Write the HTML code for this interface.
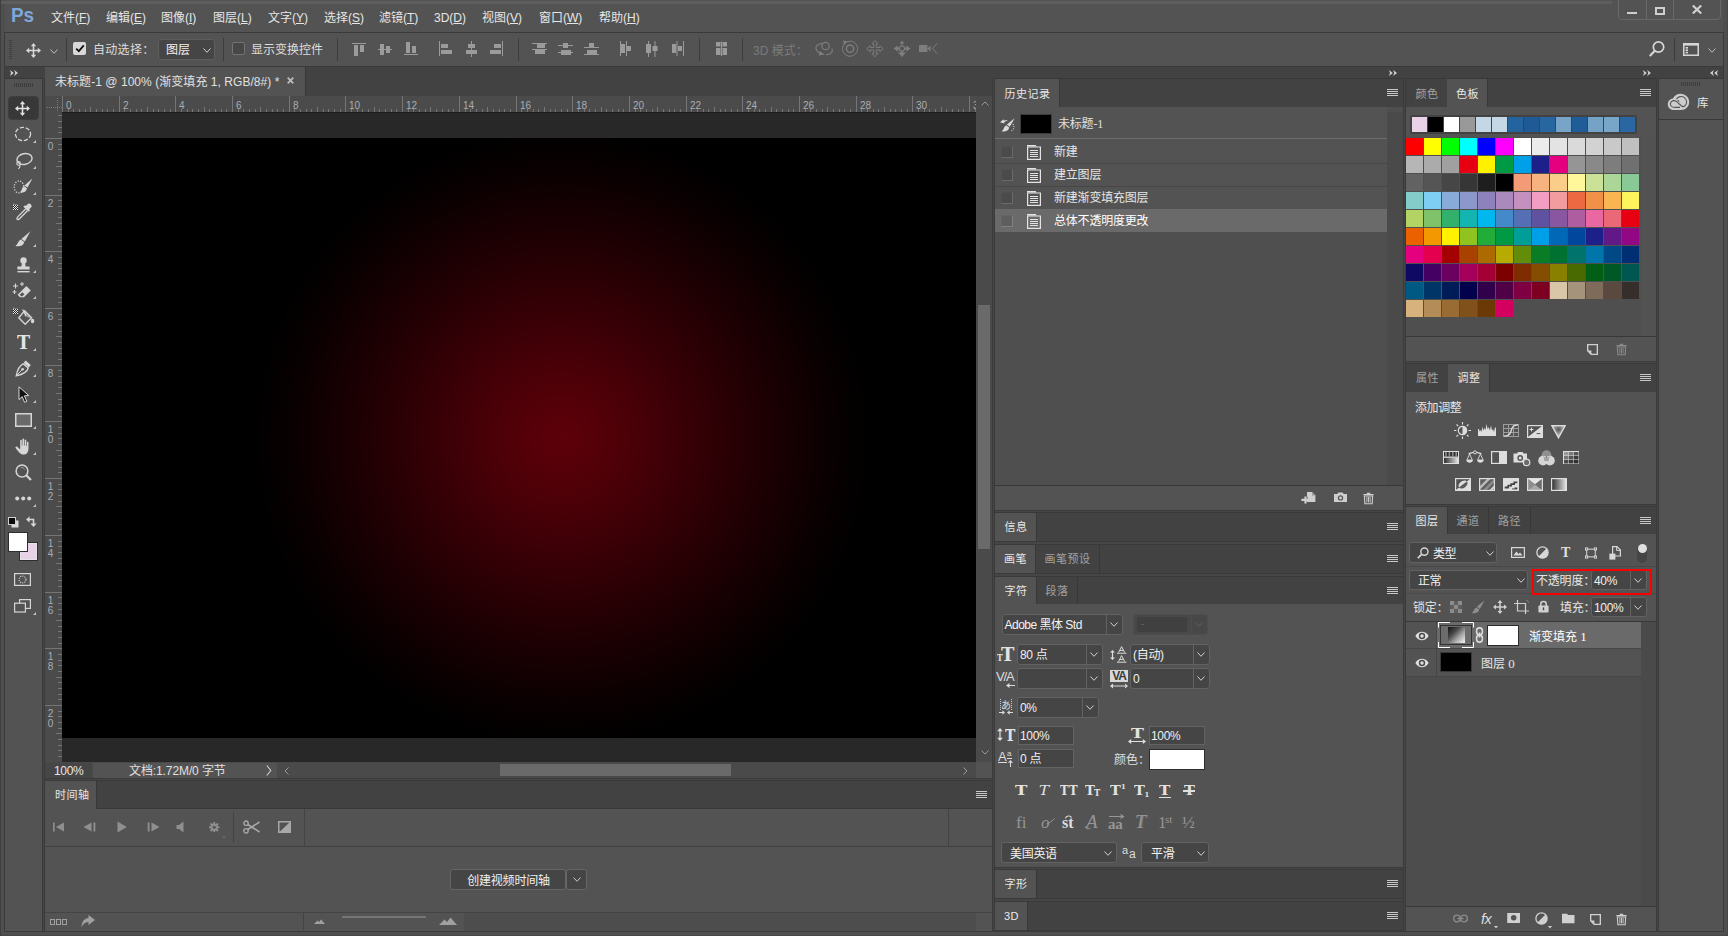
<!DOCTYPE html>
<html lang="zh-CN"><head><meta charset="utf-8"><title>Photoshop</title>
<style>
html,body{margin:0;padding:0;}
body{width:1728px;height:936px;overflow:hidden;background:#535353;position:relative;font-family:"Liberation Sans","Noto Sans CJK SC",sans-serif;font-size:12px;}
body div,body svg{position:absolute;}
div.t{font-family:"Liberation Sans","Noto Sans CJK SC",sans-serif;}
u{text-decoration:underline;text-underline-offset:1px;}
</style></head><body>
<div style="left:0px;top:0px;width:1728px;height:936px;background:#4f4f4f;"></div>
<div style="left:5px;top:0px;width:1718px;height:931px;background:#535353;"></div>
<div style="left:0px;top:1px;width:1612px;height:3px;background:#5d5d5d;"></div>
<div style="left:4px;top:33px;width:1px;height:898px;background:#3a3a3a;"></div>
<div style="left:1723px;top:33px;width:1px;height:898px;background:#3a3a3a;"></div>
<div style="left:4px;top:931px;width:1720px;height:1px;background:#3a3a3a;"></div>
<div style="left:1727px;top:0px;width:1px;height:936px;background:#474747;"></div>
<div style="left:0px;top:935px;width:1728px;height:1px;background:#474747;"></div>
<div style="left:0px;top:0px;width:1px;height:936px;background:#3e3e3e;"></div>
<div class="t" style="left:11px;top:2px;height:26px;line-height:26px;font-size:21px;font-weight:bold;color:#7ea6d8;letter-spacing:0px;font-family:'Liberation Sans',sans-serif;transform:scaleX(0.9);transform-origin:0 0">Ps</div>
<div class="t" style="left:51px;top:9px;height:18px;line-height:18px;color:#e6e6e6;font-size:12px;white-space:nowrap;">文件(<u>F</u>)</div>
<div class="t" style="left:106px;top:9px;height:18px;line-height:18px;color:#e6e6e6;font-size:12px;white-space:nowrap;">编辑(<u>E</u>)</div>
<div class="t" style="left:161px;top:9px;height:18px;line-height:18px;color:#e6e6e6;font-size:12px;white-space:nowrap;">图像(<u>I</u>)</div>
<div class="t" style="left:213px;top:9px;height:18px;line-height:18px;color:#e6e6e6;font-size:12px;white-space:nowrap;">图层(<u>L</u>)</div>
<div class="t" style="left:268px;top:9px;height:18px;line-height:18px;color:#e6e6e6;font-size:12px;white-space:nowrap;">文字(<u>Y</u>)</div>
<div class="t" style="left:324px;top:9px;height:18px;line-height:18px;color:#e6e6e6;font-size:12px;white-space:nowrap;">选择(<u>S</u>)</div>
<div class="t" style="left:379px;top:9px;height:18px;line-height:18px;color:#e6e6e6;font-size:12px;white-space:nowrap;">滤镜(<u>T</u>)</div>
<div class="t" style="left:434px;top:9px;height:18px;line-height:18px;color:#e6e6e6;font-size:12px;white-space:nowrap;">3D(<u>D</u>)</div>
<div class="t" style="left:482px;top:9px;height:18px;line-height:18px;color:#e6e6e6;font-size:12px;white-space:nowrap;">视图(<u>V</u>)</div>
<div class="t" style="left:539px;top:9px;height:18px;line-height:18px;color:#e6e6e6;font-size:12px;white-space:nowrap;">窗口(<u>W</u>)</div>
<div class="t" style="left:599px;top:9px;height:18px;line-height:18px;color:#e6e6e6;font-size:12px;white-space:nowrap;">帮助(<u>H</u>)</div>
<div style="left:1618px;top:-2px;width:103px;height:22px;border:1px solid #686868;border-radius:0 0 4px 4px;box-sizing:border-box;"></div>
<div style="left:1646px;top:0px;width:1px;height:19px;background:#686868;"></div>
<div style="left:1673px;top:0px;width:1px;height:19px;background:#686868;"></div>
<div style="left:1627px;top:12px;width:10px;height:2px;background:#cfcfcf;"></div>
<div style="left:1655px;top:7px;width:10px;height:8px;border:2px solid #cfcfcf;box-sizing:border-box;"></div>
<svg style="left:1692px;top:5px;" width="10" height="9" viewBox="0 0 10 9"><path d="M0.8 0.5 L9.2 8.5 M9.2 0.5 L0.8 8.5" stroke="#cfcfcf" stroke-width="2.2" fill="none"/></svg>
<div style="left:4px;top:32px;width:1720px;height:1px;background:#3a3a3a;"></div>
<div style="left:4px;top:66px;width:1720px;height:1px;background:#3a3a3a;"></div>
<svg style="left:9px;top:40px;" width="3" height="19" viewBox="0 0 3 19"><rect x="0" y="0" width="3" height="1" fill="#3f3f3f"/><rect x="0" y="2" width="3" height="1" fill="#3f3f3f"/><rect x="0" y="4" width="3" height="1" fill="#3f3f3f"/><rect x="0" y="6" width="3" height="1" fill="#3f3f3f"/><rect x="0" y="8" width="3" height="1" fill="#3f3f3f"/><rect x="0" y="10" width="3" height="1" fill="#3f3f3f"/><rect x="0" y="12" width="3" height="1" fill="#3f3f3f"/><rect x="0" y="14" width="3" height="1" fill="#3f3f3f"/><rect x="0" y="16" width="3" height="1" fill="#3f3f3f"/><rect x="0" y="18" width="3" height="1" fill="#3f3f3f"/></svg>
<svg style="left:26px;top:43px;" width="15" height="15" viewBox="0 0 15 15"><path d="M7.5 0 L10.2 3.2 L8.3 3.2 L8.3 6.7 L11.8 6.7 L11.8 4.8 L15 7.5 L11.8 10.2 L11.8 8.3 L8.3 8.3 L8.3 11.8 L10.2 11.8 L7.5 15 L4.8 11.8 L6.7 11.8 L6.7 8.3 L3.2 8.3 L3.2 10.2 L0 7.5 L3.2 4.8 L3.2 6.7 L6.7 6.7 L6.7 3.2 L4.8 3.2 Z" fill="#d8d8d8"/></svg>
<svg style="left:50px;top:49px;" width="8" height="5" viewBox="0 0 8 5"><path d="M0.5 0.5 L4.0 4.3 L7.5 0.5" fill="none" stroke="#bdbdbd" stroke-width="1.0"/></svg>
<div style="left:66px;top:38px;width:1px;height:23px;background:#3c3c3c;"></div>
<div style="left:73px;top:42px;width:13px;height:13px;background:#d9d9d9;border-radius:2px;"></div>
<svg style="left:75px;top:44px;" width="10" height="9" viewBox="0 0 10 9"><path d="M1.2 4.6 L3.8 7.2 L8.8 1.4" fill="none" stroke="#111" stroke-width="1.8"/></svg>
<div class="t" style="left:93px;top:41px;height:18px;line-height:18px;color:#dddddd;font-size:12px;white-space:nowrap;letter-spacing:0.3px">自动选择：</div>
<div style="left:158px;top:39px;width:57px;height:21px;background:#454545;border:1px solid #5e5e5e;border-radius:3px;box-sizing:border-box;"></div>
<div class="t" style="left:166px;top:41px;height:18px;line-height:18px;color:#f0f0f0;font-size:12px;white-space:nowrap;">图层</div>
<svg style="left:203px;top:48px;" width="8" height="5" viewBox="0 0 8 5"><path d="M0.5 0.5 L4.0 4.3 L7.5 0.5" fill="none" stroke="#cfcfcf" stroke-width="1.0"/></svg>
<div style="left:223px;top:38px;width:1px;height:23px;background:#3c3c3c;"></div>
<div style="left:232px;top:42px;width:13px;height:13px;background:#474747;border:1px solid #737373;border-radius:2px;box-sizing:border-box;"></div>
<div class="t" style="left:251px;top:41px;height:18px;line-height:18px;color:#dddddd;font-size:12px;white-space:nowrap;">显示变换控件</div>
<div style="left:337px;top:38px;width:1px;height:23px;background:#3c3c3c;"></div>
<svg style="left:340px;top:34px;" width="416" height="32" viewBox="0 0 416 32"><rect x="12" y="9" width="14" height="1" fill="#9b9b9b"/><rect x="14" y="11" width="4" height="11" fill="#9b9b9b"/><rect x="20" y="11" width="4" height="7" fill="#9b9b9b"/><rect x="38" y="15" width="14" height="1" fill="#9b9b9b"/><rect x="40" y="10" width="4" height="11" fill="#9b9b9b"/><rect x="46" y="12" width="4" height="7" fill="#9b9b9b"/><rect x="64" y="20" width="14" height="1" fill="#9b9b9b"/><rect x="66" y="8" width="4" height="11" fill="#9b9b9b"/><rect x="72" y="12" width="4" height="7" fill="#9b9b9b"/><rect x="99" y="7" width="1" height="15" fill="#9b9b9b"/><rect x="101" y="10" width="7" height="4" fill="#9b9b9b"/><rect x="101" y="16" width="11" height="4" fill="#9b9b9b"/><rect x="131" y="7" width="1" height="16" fill="#9b9b9b"/><rect x="128" y="10" width="7" height="4" fill="#9b9b9b"/><rect x="126" y="16" width="11" height="4" fill="#9b9b9b"/><rect x="162" y="7" width="1" height="15" fill="#9b9b9b"/><rect x="154" y="10" width="7" height="4" fill="#9b9b9b"/><rect x="150" y="16" width="11" height="4" fill="#9b9b9b"/><rect x="192" y="9" width="15" height="1" fill="#9b9b9b"/><rect x="197" y="10" width="8" height="4" fill="#9b9b9b"/><rect x="192" y="15" width="15" height="1" fill="#9b9b9b"/><rect x="195" y="16" width="10" height="4" fill="#9b9b9b"/><rect x="218" y="11" width="15" height="1" fill="#9b9b9b"/><rect x="223" y="9" width="5" height="5" fill="#9b9b9b"/><rect x="218" y="18" width="15" height="1" fill="#9b9b9b"/><rect x="221" y="16" width="10" height="5" fill="#9b9b9b"/><rect x="244" y="13" width="15" height="1" fill="#9b9b9b"/><rect x="249" y="9" width="5" height="4" fill="#9b9b9b"/><rect x="244" y="20" width="15" height="1" fill="#9b9b9b"/><rect x="247" y="16" width="10" height="4" fill="#9b9b9b"/><rect x="280" y="7" width="1" height="15" fill="#9b9b9b"/><rect x="281" y="10" width="4" height="9" fill="#9b9b9b"/><rect x="286" y="7" width="1" height="15" fill="#9b9b9b"/><rect x="287" y="12" width="4" height="5" fill="#9b9b9b"/><rect x="308" y="7" width="1" height="16" fill="#9b9b9b"/><rect x="306" y="10" width="5" height="9" fill="#9b9b9b"/><rect x="314.5" y="7" width="1" height="16" fill="#9b9b9b"/><rect x="312.5" y="12" width="5" height="5" fill="#9b9b9b"/><rect x="332" y="10" width="4" height="9" fill="#9b9b9b"/><rect x="336.5" y="7" width="1" height="15" fill="#9b9b9b"/><rect x="338" y="12" width="4" height="5" fill="#9b9b9b"/><rect x="343" y="7" width="1" height="15" fill="#9b9b9b"/><rect x="376" y="8" width="4.5" height="4.5" fill="#9b9b9b"/><rect x="382.5" y="8" width="4.5" height="4.5" fill="#9b9b9b"/><rect x="376" y="14" width="4.5" height="7" fill="#9b9b9b"/><rect x="382.5" y="14" width="4.5" height="7" fill="#9b9b9b"/><rect x="381" y="7.5" width="1" height="14.5" fill="#9b9b9b"/></svg>
<div style="left:518px;top:38px;width:1px;height:23px;background:#3c3c3c;"></div>
<div style="left:699px;top:38px;width:1px;height:23px;background:#3c3c3c;"></div>
<div style="left:742px;top:38px;width:1px;height:23px;background:#3c3c3c;"></div>
<div class="t" style="left:753px;top:42px;height:18px;line-height:18px;color:#7b7b7b;font-size:12px;white-space:nowrap;">3D 模式：</div>
<svg style="left:812px;top:38px;" width="130" height="22" viewBox="0 0 130 22"><circle cx="13.600000000000023" cy="8" r="3.7" fill="none" stroke="#7e7e7e" stroke-width="1.2"/><path d="M822 43.4 C818 43.6 814.6 46.4 816.4 50 C817.2 51.6 818.6 52.8 820.4 53.6" fill="none" stroke="#7e7e7e" stroke-width="1.1" transform="translate(-812 -38)"/><path d="M819.6 51 L824.8 54.6 L818.6 55.6Z" fill="#7e7e7e" stroke="none" stroke-width="1.1" transform="translate(-812 -38)"/><path d="M826 54.6 C830 54.8 833.6 52.4 831.8 48.6" fill="none" stroke="#7e7e7e" stroke-width="1.1" transform="translate(-812 -38)"/><circle cx="38" cy="10.700000000000003" r="7.6" fill="none" stroke="#7e7e7e" stroke-width="1"/><circle cx="38" cy="10.700000000000003" r="3.6" fill="none" stroke="#7e7e7e" stroke-width="1.5"/><path d="M843 40.6 L847.4 41.6 L844.2 45Z" fill="#7e7e7e" stroke="none" stroke-width="1.1" transform="translate(-812 -38)"/><path d="M875 40.6 L878 44 H876.2 V47.5 H879.8 V45.7 L883.2 48.7 L879.8 51.7 V49.9 H876.2 V53.4 H878 L875 56.8 L872 53.4 H873.8 V49.9 H870.2 V51.7 L866.8 48.7 L870.2 45.7 V47.5 H873.8 V44 H872Z" fill="none" stroke="#7e7e7e" stroke-width="1" transform="translate(-812 -38)"/><path d="M902 40.6 L904.4 43.6 H899.6Z M893.6 48.6 L897.8 45.4 V47.6 H899 V49.6 H897.8 V51.8Z M910.6 48.6 L906.4 45.4 V47.6 H905 V49.6 H906.4 V51.8Z M902 57 L898 52.6 H900.6 V51.6 H903.4 V52.6 H906Z M901.4 43.4 H902.6 V45.6 H901.4Z" fill="#7e7e7e" stroke="none" stroke-width="1.1" transform="translate(-812 -38)"/><circle cx="90" cy="10.600000000000001" r="2.6" fill="none" stroke="#7e7e7e" stroke-width="1.2"/><path d="M919 45 H927.4 V52 H919Z M927.4 48.5 L930.6 45.6 V51.4Z" fill="#7e7e7e" stroke="none" stroke-width="1.1" transform="translate(-812 -38)"/><path d="M937 43.4 L932.6 48.5 L937 53.6" fill="none" stroke="#7e7e7e" stroke-width="1" transform="translate(-812 -38)"/></svg>
<svg style="left:1648px;top:40px;" width="18" height="18" viewBox="0 0 18 18"><circle cx="10.5" cy="7" r="5.2" fill="none" stroke="#d6d6d6" stroke-width="1.7"/><path d="M6.8 10.8 L1.8 16" stroke="#d6d6d6" stroke-width="2.2" fill="none"/></svg>
<div style="left:1674px;top:38px;width:1px;height:23px;background:#3c3c3c;"></div>
<svg style="left:1683px;top:43px;" width="16" height="13" viewBox="0 0 16 13"><rect x="0.75" y="0.75" width="14.5" height="11.5" fill="none" stroke="#d6d6d6" stroke-width="1.5"/><rect x="1" y="1" width="14" height="1.6" fill="#d6d6d6"/><rect x="2.6" y="4" width="2.4" height="1.6" fill="#d6d6d6"/><rect x="2.6" y="6.4" width="2.4" height="1.6" fill="#d6d6d6"/><rect x="2.6" y="8.8" width="2.4" height="1.6" fill="#d6d6d6"/></svg>
<svg style="left:1708px;top:48px;" width="8" height="5" viewBox="0 0 8 5"><path d="M0.5 0.5 L4.0 4.3 L7.5 0.5" fill="none" stroke="#bdbdbd" stroke-width="1.0"/></svg>
<div style="left:5px;top:67px;width:1718px;height:11px;background:#424242;"></div>
<div style="left:5px;top:78px;width:40px;height:1px;background:#383838;"></div>
<svg style="left:10px;top:70px;" width="8" height="6" viewBox="0 0 8 6"><path d="M0 0 L3.8 3 L0 6 L1 3 Z M4.2 0 L8 3 L4.2 6 L5.2 3 Z" fill="#cfcfcf"/></svg>
<div style="left:42px;top:78px;width:3px;height:853px;background:#464646;"></div>
<div style="left:42px;top:78px;width:1px;height:853px;background:#3a3a3a;"></div>
<div style="left:44px;top:78px;width:1px;height:853px;background:#3a3a3a;"></div>
<div style="left:45px;top:67px;width:947px;height:29px;background:#424242;"></div>
<div style="left:45px;top:67px;width:260px;height:29px;background:#535353;"></div>
<div style="left:305px;top:67px;width:1px;height:29px;background:#383838;"></div>
<div class="t" style="left:55px;top:73px;height:18px;line-height:18px;color:#e0e0e0;font-size:12px;white-space:nowrap;letter-spacing:0.05px">未标题-1 @ 100% (渐变填充 1, RGB/8#) *</div>
<svg style="left:287px;top:77px;" width="7" height="7" viewBox="0 0 7 7"><path d="M0.7 0.7 L6.3 6.3 M6.3 0.7 L0.7 6.3" stroke="#bdbdbd" stroke-width="1.7" fill="none"/></svg>
<div style="left:45px;top:96px;width:931px;height:16px;background:#4b4b4b;"></div>
<div style="left:45px;top:112px;width:17px;height:650px;background:#4b4b4b;"></div>
<svg style="left:45px;top:96px;" width="17" height="16" viewBox="0 0 17 16"><path d="M12.5 2V16 M2 11.5H17" stroke="#7a7a7a" stroke-width="1" stroke-dasharray="1 1" fill="none"/></svg>
<svg style="left:62px;top:96px" width="914" height="16"><g stroke="#757575" stroke-width="1"><path d="M0.5 0V16"/><path d="M6.5 13V16"/><path d="M11.5 13V16"/><path d="M17.5 13V16"/><path d="M23.5 13V16"/><path d="M28.5 11V16"/><path d="M34.5 13V16"/><path d="M40.5 13V16"/><path d="M45.5 13V16"/><path d="M51.5 13V16"/><path d="M57.5 0V16"/><path d="M62.5 13V16"/><path d="M68.5 13V16"/><path d="M74.5 13V16"/><path d="M79.5 13V16"/><path d="M85.5 11V16"/><path d="M91.5 13V16"/><path d="M96.5 13V16"/><path d="M102.5 13V16"/><path d="M108.5 13V16"/><path d="M113.5 0V16"/><path d="M119.5 13V16"/><path d="M125.5 13V16"/><path d="M130.5 13V16"/><path d="M136.5 13V16"/><path d="M142.5 11V16"/><path d="M147.5 13V16"/><path d="M153.5 13V16"/><path d="M159.5 13V16"/><path d="M164.5 13V16"/><path d="M170.5 0V16"/><path d="M176.5 13V16"/><path d="M181.5 13V16"/><path d="M187.5 13V16"/><path d="M193.5 13V16"/><path d="M198.5 11V16"/><path d="M204.5 13V16"/><path d="M210.5 13V16"/><path d="M215.5 13V16"/><path d="M221.5 13V16"/><path d="M227.5 0V16"/><path d="M232.5 13V16"/><path d="M238.5 13V16"/><path d="M244.5 13V16"/><path d="M249.5 13V16"/><path d="M255.5 11V16"/><path d="M261.5 13V16"/><path d="M266.5 13V16"/><path d="M272.5 13V16"/><path d="M278.5 13V16"/><path d="M283.5 0V16"/><path d="M289.5 13V16"/><path d="M295.5 13V16"/><path d="M300.5 13V16"/><path d="M306.5 13V16"/><path d="M312.5 11V16"/><path d="M317.5 13V16"/><path d="M323.5 13V16"/><path d="M329.5 13V16"/><path d="M334.5 13V16"/><path d="M340.5 0V16"/><path d="M346.5 13V16"/><path d="M351.5 13V16"/><path d="M357.5 13V16"/><path d="M363.5 13V16"/><path d="M368.5 11V16"/><path d="M374.5 13V16"/><path d="M380.5 13V16"/><path d="M386.5 13V16"/><path d="M391.5 13V16"/><path d="M397.5 0V16"/><path d="M403.5 13V16"/><path d="M408.5 13V16"/><path d="M414.5 13V16"/><path d="M420.5 13V16"/><path d="M425.5 11V16"/><path d="M431.5 13V16"/><path d="M437.5 13V16"/><path d="M442.5 13V16"/><path d="M448.5 13V16"/><path d="M454.5 0V16"/><path d="M459.5 13V16"/><path d="M465.5 13V16"/><path d="M471.5 13V16"/><path d="M476.5 13V16"/><path d="M482.5 11V16"/><path d="M488.5 13V16"/><path d="M493.5 13V16"/><path d="M499.5 13V16"/><path d="M505.5 13V16"/><path d="M510.5 0V16"/><path d="M516.5 13V16"/><path d="M522.5 13V16"/><path d="M527.5 13V16"/><path d="M533.5 13V16"/><path d="M539.5 11V16"/><path d="M544.5 13V16"/><path d="M550.5 13V16"/><path d="M556.5 13V16"/><path d="M561.5 13V16"/><path d="M567.5 0V16"/><path d="M573.5 13V16"/><path d="M578.5 13V16"/><path d="M584.5 13V16"/><path d="M590.5 13V16"/><path d="M595.5 11V16"/><path d="M601.5 13V16"/><path d="M607.5 13V16"/><path d="M612.5 13V16"/><path d="M618.5 13V16"/><path d="M624.5 0V16"/><path d="M629.5 13V16"/><path d="M635.5 13V16"/><path d="M641.5 13V16"/><path d="M646.5 13V16"/><path d="M652.5 11V16"/><path d="M658.5 13V16"/><path d="M663.5 13V16"/><path d="M669.5 13V16"/><path d="M675.5 13V16"/><path d="M680.5 0V16"/><path d="M686.5 13V16"/><path d="M692.5 13V16"/><path d="M697.5 13V16"/><path d="M703.5 13V16"/><path d="M709.5 11V16"/><path d="M714.5 13V16"/><path d="M720.5 13V16"/><path d="M726.5 13V16"/><path d="M731.5 13V16"/><path d="M737.5 0V16"/><path d="M743.5 13V16"/><path d="M748.5 13V16"/><path d="M754.5 13V16"/><path d="M760.5 13V16"/><path d="M765.5 11V16"/><path d="M771.5 13V16"/><path d="M777.5 13V16"/><path d="M782.5 13V16"/><path d="M788.5 13V16"/><path d="M794.5 0V16"/><path d="M799.5 13V16"/><path d="M805.5 13V16"/><path d="M811.5 13V16"/><path d="M816.5 13V16"/><path d="M822.5 11V16"/><path d="M828.5 13V16"/><path d="M833.5 13V16"/><path d="M839.5 13V16"/><path d="M845.5 13V16"/><path d="M850.5 0V16"/><path d="M856.5 13V16"/><path d="M862.5 13V16"/><path d="M867.5 13V16"/><path d="M873.5 13V16"/><path d="M879.5 11V16"/><path d="M884.5 13V16"/><path d="M890.5 13V16"/><path d="M896.5 13V16"/><path d="M901.5 13V16"/><path d="M907.5 0V16"/><path d="M913.5 13V16"/></g></svg>
<div class="t" style="left:66px;top:100px;height:11px;line-height:11px;color:#a9adb3;font-size:10px;white-space:nowrap;font-family:'Liberation Sans',sans-serif;">0</div>
<div class="t" style="left:123px;top:100px;height:11px;line-height:11px;color:#a9adb3;font-size:10px;white-space:nowrap;font-family:'Liberation Sans',sans-serif;">2</div>
<div class="t" style="left:179px;top:100px;height:11px;line-height:11px;color:#a9adb3;font-size:10px;white-space:nowrap;font-family:'Liberation Sans',sans-serif;">4</div>
<div class="t" style="left:236px;top:100px;height:11px;line-height:11px;color:#a9adb3;font-size:10px;white-space:nowrap;font-family:'Liberation Sans',sans-serif;">6</div>
<div class="t" style="left:293px;top:100px;height:11px;line-height:11px;color:#a9adb3;font-size:10px;white-space:nowrap;font-family:'Liberation Sans',sans-serif;">8</div>
<div class="t" style="left:349px;top:100px;height:11px;line-height:11px;color:#a9adb3;font-size:10px;white-space:nowrap;font-family:'Liberation Sans',sans-serif;">10</div>
<div class="t" style="left:406px;top:100px;height:11px;line-height:11px;color:#a9adb3;font-size:10px;white-space:nowrap;font-family:'Liberation Sans',sans-serif;">12</div>
<div class="t" style="left:463px;top:100px;height:11px;line-height:11px;color:#a9adb3;font-size:10px;white-space:nowrap;font-family:'Liberation Sans',sans-serif;">14</div>
<div class="t" style="left:520px;top:100px;height:11px;line-height:11px;color:#a9adb3;font-size:10px;white-space:nowrap;font-family:'Liberation Sans',sans-serif;">16</div>
<div class="t" style="left:576px;top:100px;height:11px;line-height:11px;color:#a9adb3;font-size:10px;white-space:nowrap;font-family:'Liberation Sans',sans-serif;">18</div>
<div class="t" style="left:633px;top:100px;height:11px;line-height:11px;color:#a9adb3;font-size:10px;white-space:nowrap;font-family:'Liberation Sans',sans-serif;">20</div>
<div class="t" style="left:690px;top:100px;height:11px;line-height:11px;color:#a9adb3;font-size:10px;white-space:nowrap;font-family:'Liberation Sans',sans-serif;">22</div>
<div class="t" style="left:746px;top:100px;height:11px;line-height:11px;color:#a9adb3;font-size:10px;white-space:nowrap;font-family:'Liberation Sans',sans-serif;">24</div>
<div class="t" style="left:803px;top:100px;height:11px;line-height:11px;color:#a9adb3;font-size:10px;white-space:nowrap;font-family:'Liberation Sans',sans-serif;">26</div>
<div class="t" style="left:860px;top:100px;height:11px;line-height:11px;color:#a9adb3;font-size:10px;white-space:nowrap;font-family:'Liberation Sans',sans-serif;">28</div>
<div class="t" style="left:916px;top:100px;height:11px;line-height:11px;color:#a9adb3;font-size:10px;white-space:nowrap;font-family:'Liberation Sans',sans-serif;">30</div>
<div class="t" style="left:973px;top:100px;height:11px;line-height:11px;color:#a9adb3;font-size:10px;white-space:nowrap;font-family:'Liberation Sans',sans-serif;width:3px;overflow:hidden;">3</div>
<svg style="left:45px;top:112px" width="17" height="650"><g stroke="#757575" stroke-width="1"><path d="M13 3.5H17"/><path d="M13 9.5H17"/><path d="M13 15.5H17"/><path d="M13 20.5H17"/><path d="M0 26.5H17"/><path d="M13 32.5H17"/><path d="M13 37.5H17"/><path d="M13 43.5H17"/><path d="M13 49.5H17"/><path d="M11 54.5H17"/><path d="M13 60.5H17"/><path d="M13 66.5H17"/><path d="M13 71.5H17"/><path d="M13 77.5H17"/><path d="M0 83.5H17"/><path d="M13 88.5H17"/><path d="M13 94.5H17"/><path d="M13 100.5H17"/><path d="M13 105.5H17"/><path d="M11 111.5H17"/><path d="M13 117.5H17"/><path d="M13 122.5H17"/><path d="M13 128.5H17"/><path d="M13 134.5H17"/><path d="M0 139.5H17"/><path d="M13 145.5H17"/><path d="M13 151.5H17"/><path d="M13 156.5H17"/><path d="M13 162.5H17"/><path d="M11 168.5H17"/><path d="M13 173.5H17"/><path d="M13 179.5H17"/><path d="M13 185.5H17"/><path d="M13 190.5H17"/><path d="M0 196.5H17"/><path d="M13 202.5H17"/><path d="M13 207.5H17"/><path d="M13 213.5H17"/><path d="M13 219.5H17"/><path d="M11 224.5H17"/><path d="M13 230.5H17"/><path d="M13 236.5H17"/><path d="M13 241.5H17"/><path d="M13 247.5H17"/><path d="M0 253.5H17"/><path d="M13 258.5H17"/><path d="M13 264.5H17"/><path d="M13 270.5H17"/><path d="M13 275.5H17"/><path d="M11 281.5H17"/><path d="M13 287.5H17"/><path d="M13 292.5H17"/><path d="M13 298.5H17"/><path d="M13 304.5H17"/><path d="M0 309.5H17"/><path d="M13 315.5H17"/><path d="M13 321.5H17"/><path d="M13 326.5H17"/><path d="M13 332.5H17"/><path d="M11 338.5H17"/><path d="M13 343.5H17"/><path d="M13 349.5H17"/><path d="M13 355.5H17"/><path d="M13 360.5H17"/><path d="M0 366.5H17"/><path d="M13 372.5H17"/><path d="M13 377.5H17"/><path d="M13 383.5H17"/><path d="M13 389.5H17"/><path d="M11 394.5H17"/><path d="M13 400.5H17"/><path d="M13 406.5H17"/><path d="M13 412.5H17"/><path d="M13 417.5H17"/><path d="M0 423.5H17"/><path d="M13 429.5H17"/><path d="M13 434.5H17"/><path d="M13 440.5H17"/><path d="M13 446.5H17"/><path d="M11 451.5H17"/><path d="M13 457.5H17"/><path d="M13 463.5H17"/><path d="M13 468.5H17"/><path d="M13 474.5H17"/><path d="M0 480.5H17"/><path d="M13 485.5H17"/><path d="M13 491.5H17"/><path d="M13 497.5H17"/><path d="M13 502.5H17"/><path d="M11 508.5H17"/><path d="M13 514.5H17"/><path d="M13 519.5H17"/><path d="M13 525.5H17"/><path d="M13 531.5H17"/><path d="M0 536.5H17"/><path d="M13 542.5H17"/><path d="M13 548.5H17"/><path d="M13 553.5H17"/><path d="M13 559.5H17"/><path d="M11 565.5H17"/><path d="M13 570.5H17"/><path d="M13 576.5H17"/><path d="M13 582.5H17"/><path d="M13 587.5H17"/><path d="M0 593.5H17"/><path d="M13 599.5H17"/><path d="M13 604.5H17"/><path d="M13 610.5H17"/><path d="M13 616.5H17"/><path d="M11 621.5H17"/><path d="M13 627.5H17"/><path d="M13 633.5H17"/><path d="M13 638.5H17"/><path d="M13 644.5H17"/></g></svg>
<div class="t" style="left:47px;top:141px;height:11px;line-height:11px;color:#a9adb3;font-size:10px;white-space:nowrap;font-family:'Liberation Sans',sans-serif;width:7px;text-align:center;">0</div>
<div class="t" style="left:47px;top:198px;height:11px;line-height:11px;color:#a9adb3;font-size:10px;white-space:nowrap;font-family:'Liberation Sans',sans-serif;width:7px;text-align:center;">2</div>
<div class="t" style="left:47px;top:254px;height:11px;line-height:11px;color:#a9adb3;font-size:10px;white-space:nowrap;font-family:'Liberation Sans',sans-serif;width:7px;text-align:center;">4</div>
<div class="t" style="left:47px;top:311px;height:11px;line-height:11px;color:#a9adb3;font-size:10px;white-space:nowrap;font-family:'Liberation Sans',sans-serif;width:7px;text-align:center;">6</div>
<div class="t" style="left:47px;top:368px;height:11px;line-height:11px;color:#a9adb3;font-size:10px;white-space:nowrap;font-family:'Liberation Sans',sans-serif;width:7px;text-align:center;">8</div>
<div class="t" style="left:47px;top:424px;height:11px;line-height:11px;color:#a9adb3;font-size:10px;white-space:nowrap;font-family:'Liberation Sans',sans-serif;width:7px;text-align:center;">1</div>
<div class="t" style="left:47px;top:434px;height:11px;line-height:11px;color:#a9adb3;font-size:10px;white-space:nowrap;font-family:'Liberation Sans',sans-serif;width:7px;text-align:center;">0</div>
<div class="t" style="left:47px;top:481px;height:11px;line-height:11px;color:#a9adb3;font-size:10px;white-space:nowrap;font-family:'Liberation Sans',sans-serif;width:7px;text-align:center;">1</div>
<div class="t" style="left:47px;top:491px;height:11px;line-height:11px;color:#a9adb3;font-size:10px;white-space:nowrap;font-family:'Liberation Sans',sans-serif;width:7px;text-align:center;">2</div>
<div class="t" style="left:47px;top:538px;height:11px;line-height:11px;color:#a9adb3;font-size:10px;white-space:nowrap;font-family:'Liberation Sans',sans-serif;width:7px;text-align:center;">1</div>
<div class="t" style="left:47px;top:548px;height:11px;line-height:11px;color:#a9adb3;font-size:10px;white-space:nowrap;font-family:'Liberation Sans',sans-serif;width:7px;text-align:center;">4</div>
<div class="t" style="left:47px;top:595px;height:11px;line-height:11px;color:#a9adb3;font-size:10px;white-space:nowrap;font-family:'Liberation Sans',sans-serif;width:7px;text-align:center;">1</div>
<div class="t" style="left:47px;top:605px;height:11px;line-height:11px;color:#a9adb3;font-size:10px;white-space:nowrap;font-family:'Liberation Sans',sans-serif;width:7px;text-align:center;">6</div>
<div class="t" style="left:47px;top:651px;height:11px;line-height:11px;color:#a9adb3;font-size:10px;white-space:nowrap;font-family:'Liberation Sans',sans-serif;width:7px;text-align:center;">1</div>
<div class="t" style="left:47px;top:661px;height:11px;line-height:11px;color:#a9adb3;font-size:10px;white-space:nowrap;font-family:'Liberation Sans',sans-serif;width:7px;text-align:center;">8</div>
<div class="t" style="left:47px;top:708px;height:11px;line-height:11px;color:#a9adb3;font-size:10px;white-space:nowrap;font-family:'Liberation Sans',sans-serif;width:7px;text-align:center;">2</div>
<div class="t" style="left:47px;top:718px;height:11px;line-height:11px;color:#a9adb3;font-size:10px;white-space:nowrap;font-family:'Liberation Sans',sans-serif;width:7px;text-align:center;">0</div>
<div style="left:62px;top:112px;width:914px;height:650px;background:#282828;"></div>
<div style="left:62px;top:112px;width:914px;height:1px;background:#1d1d1d;"></div>
<div style="left:62px;top:138px;width:914px;height:600px;background:#000;overflow:hidden;"><div style="position:absolute;left:0;top:0;width:1000px;height:600px;background:radial-gradient(circle 300px at 500px 300px, rgb(92,0,9) 0%, rgb(90,0,9) 5%, rgb(83,0,8) 14%, rgb(72,0,7) 26%, rgb(57,0,6) 40%, rgb(47,0,5) 50%, rgb(32,0,3) 65%, rgb(20,0,2) 78%, rgb(9,0,1) 90%, rgb(2,0,0) 100%, rgb(0,0,0) 104%),#000"></div></div>
<div style="left:976px;top:96px;width:16px;height:666px;background:#4a4a4a;"></div>
<svg style="left:981px;top:101px;" width="8" height="5" viewBox="0 0 8 5"><path d="M0.5 4.5 L4 1 L7.5 4.5" fill="none" stroke="#9a9a9a" stroke-width="1"/></svg>
<svg style="left:981px;top:750px;" width="8" height="5" viewBox="0 0 8 5"><path d="M0.5 0.5 L4 4 L7.5 0.5" fill="none" stroke="#9a9a9a" stroke-width="1"/></svg>
<div style="left:978px;top:305px;width:12px;height:244px;background:#6a6a6a;"></div>
<div style="left:992px;top:78px;width:3px;height:853px;background:#464646;"></div>
<div style="left:992px;top:78px;width:1px;height:853px;background:#3a3a3a;"></div>
<div style="left:994px;top:78px;width:1px;height:853px;background:#3a3a3a;"></div>
<div style="left:45px;top:762px;width:931px;height:16px;background:#4a4a4a;"></div>
<div style="left:976px;top:762px;width:16px;height:16px;background:#535353;"></div>
<div style="left:45px;top:763px;width:47px;height:15px;background:#464646;"></div>
<div class="t" style="left:54px;top:762.5px;height:16px;line-height:16px;color:#e6e6e6;font-size:12px;white-space:nowrap;font-family:'Liberation Sans',sans-serif;letter-spacing:-0.3px">100%</div>
<div style="left:93px;top:763px;width:184px;height:15px;background:#535353;"></div>
<div class="t" style="left:129px;top:763px;height:16px;line-height:16px;color:#e0e0e0;font-size:12px;white-space:nowrap;letter-spacing:-0.1px">文档:1.72M/0 字节</div>
<svg style="left:266px;top:765px;" width="6" height="11" viewBox="0 0 6 11"><path d="M0.8 0.5 L4.8 5.5 L0.8 10.5" fill="none" stroke="#d0d0d0" stroke-width="1.1"/></svg>
<svg style="left:284px;top:767px;" width="5" height="8" viewBox="0 0 5 8"><path d="M4.5 0.5 L1 4 L4.5 7.5" fill="none" stroke="#9a9a9a" stroke-width="1"/></svg>
<svg style="left:963px;top:767px;" width="5" height="8" viewBox="0 0 5 8"><path d="M0.5 0.5 L4 4 L0.5 7.5" fill="none" stroke="#9a9a9a" stroke-width="1"/></svg>
<div style="left:500px;top:764px;width:231px;height:12px;background:#6a6a6a;"></div>
<div style="left:45px;top:778px;width:947px;height:3px;background:#464646;"></div>
<div style="left:45px;top:778px;width:947px;height:1px;background:#3a3a3a;"></div>
<div style="left:45px;top:780px;width:947px;height:1px;background:#3a3a3a;"></div>
<div style="left:45px;top:781px;width:947px;height:27px;background:#424242;"></div>
<div style="left:45px;top:781px;width:51px;height:28px;background:#535353;"></div>
<div style="left:96px;top:781px;width:1px;height:27px;background:#383838;"></div>
<div class="t" style="left:55px;top:786px;height:18px;line-height:18px;color:#e6e6e6;font-size:11px;white-space:nowrap;letter-spacing:0.5px">时间轴</div>
<svg style="left:976px;top:791px;" width="11" height="8" viewBox="0 0 11 8"><rect x="0" y="0" width="11" height="1" fill="#c8c8c8"/><rect x="0" y="2" width="11" height="1" fill="#c8c8c8"/><rect x="0" y="4" width="11" height="1" fill="#c8c8c8"/><rect x="0" y="6" width="11" height="1" fill="#c8c8c8"/></svg>
<div style="left:96px;top:808px;width:896px;height:1px;background:#383838;"></div>
<div style="left:45px;top:809px;width:947px;height:122px;background:#535353;"></div>
<div style="left:45px;top:846px;width:947px;height:1px;background:#414141;"></div>
<div style="left:233px;top:812px;width:1px;height:31px;background:#434343;"></div>
<div style="left:304px;top:809px;width:1px;height:37px;background:#434343;"></div>
<div style="left:948px;top:809px;width:1px;height:37px;background:#434343;"></div>
<svg style="left:53px;top:822px;" width="12" height="10" viewBox="0 0 12 10"><rect x="0" y="0.5" width="1.6" height="9" fill="#8f8f8f"/><path d="M11 0.5 V9.5 L3 5Z" fill="#8f8f8f"/></svg>
<svg style="left:83px;top:822px;" width="14" height="10" viewBox="0 0 14 10"><path d="M8.5 0.5 V9.5 L0.5 5Z" fill="#8f8f8f"/><rect x="10.5" y="0.5" width="1.8" height="9" fill="#8f8f8f"/></svg>
<svg style="left:117px;top:821px;" width="10" height="12" viewBox="0 0 10 12"><path d="M0.5 0.5 L9.8 6 L0.5 11.5Z" fill="#8f8f8f"/></svg>
<svg style="left:147px;top:822px;" width="14" height="10" viewBox="0 0 14 10"><rect x="0.7" y="0.5" width="1.8" height="9" fill="#8f8f8f"/><path d="M4.5 0.5 V9.5 L12.5 5Z" fill="#8f8f8f"/></svg>
<svg style="left:176px;top:821px;" width="9" height="12" viewBox="0 0 9 12"><path d="M0.5 4 H3 L7.5 0.5 V11.5 L3 8 H0.5Z" fill="#8f8f8f"/></svg>
<svg style="left:209px;top:821.5px;" width="10.5" height="10.5" viewBox="0 0 12 12"><rect x="4.9" y="0" width="2.2" height="12" fill="#8f8f8f" transform="rotate(0 6 6)"/><rect x="4.9" y="0" width="2.2" height="12" fill="#8f8f8f" transform="rotate(45 6 6)"/><rect x="4.9" y="0" width="2.2" height="12" fill="#8f8f8f" transform="rotate(90 6 6)"/><rect x="4.9" y="0" width="2.2" height="12" fill="#8f8f8f" transform="rotate(135 6 6)"/><circle cx="6" cy="6" r="4" fill="#8f8f8f"/><circle cx="6" cy="6" r="1.8" fill="#535353"/></svg>
<svg style="left:222px;top:836px;" width="4" height="2.5" viewBox="0 0 4 2.5"><path d="M0 0H4L2 2.5Z" fill="#686868"/></svg>
<svg style="left:243px;top:820px;" width="17" height="14" viewBox="0 0 17 14"><circle cx="3" cy="3.2" r="2.2" fill="none" stroke="#a8a8a8" stroke-width="1.4"/><circle cx="3" cy="10.8" r="2.2" fill="none" stroke="#a8a8a8" stroke-width="1.4"/><path d="M4.8 4.5 L16.5 12 M4.8 9.5 L16.5 2" stroke="#a8a8a8" stroke-width="1.5" fill="none"/></svg>
<svg style="left:278px;top:821px;" width="13" height="12" viewBox="0 0 13 12"><rect x="0.75" y="0.75" width="11.5" height="10.5" fill="none" stroke="#a8a8a8" stroke-width="1.5"/><path d="M12 1 V11 H1.5Z" fill="#a8a8a8"/></svg>
<div style="left:45px;top:912px;width:947px;height:1px;background:#444444;"></div>
<div style="left:464px;top:913px;width:512px;height:18px;background:#4d4d4d;"></div>
<div style="left:303px;top:913px;width:1px;height:17px;background:#434343;"></div>
<svg style="left:50px;top:919px;" width="18" height="7" viewBox="0 0 18 7"><rect x="0.5" y="0.5" width="4" height="5" fill="none" stroke="#a0a0a0" stroke-width="1"/><rect x="6.5" y="0.5" width="4" height="5" fill="none" stroke="#a0a0a0" stroke-width="1"/><rect x="12.5" y="0.5" width="4" height="5" fill="none" stroke="#a0a0a0" stroke-width="1"/></svg>
<svg style="left:81px;top:915px;" width="14" height="12" viewBox="0 0 14 12"><path d="M7.5 0 L14 5 L7.5 10 V7 C4.5 7 2.5 8.5 0.5 12 C0.8 7 3 3.5 7.5 3 Z" fill="#a0a0a0"/></svg>
<svg style="left:314px;top:919px;" width="11" height="5" viewBox="0 0 11 5"><path d="M0 5 L3.5 1.5 L5 3 L7 0.5 L11 5Z" fill="#a0a0a0"/></svg>
<div style="left:342px;top:916px;width:84px;height:2px;background:#757575;"></div>
<svg style="left:439px;top:917px;" width="18" height="8" viewBox="0 0 18 8"><path d="M0 8 L5.5 2.5 L8 5 L11.5 0.5 L18 8Z" fill="#a0a0a0"/></svg>
<div style="left:450px;top:869px;width:116px;height:21px;background:#454545;border:1px solid #666;border-radius:3px;box-sizing:border-box;"></div>
<div class="t" style="left:451px;top:872px;height:18px;line-height:18px;color:#f0f0f0;font-size:12px;white-space:nowrap;width:115px;text-align:center;letter-spacing:-0.2px">创建视频时间轴</div>
<div style="left:566px;top:869px;width:21px;height:21px;background:#454545;border:1px solid #666;border-radius:3px;box-sizing:border-box;"></div>
<svg style="left:573px;top:877px;" width="8" height="5" viewBox="0 0 8 5"><path d="M0.5 0.5 L4.0 4.3 L7.5 0.5" fill="none" stroke="#c8c8c8" stroke-width="1.0"/></svg>
<svg style="left:14px;top:83px;" width="20" height="4" viewBox="0 0 20 4"><rect x="0" y="0" width="1" height="4" fill="#3c3c3c"/><rect x="2" y="0" width="1" height="4" fill="#3c3c3c"/><rect x="4" y="0" width="1" height="4" fill="#3c3c3c"/><rect x="6" y="0" width="1" height="4" fill="#3c3c3c"/><rect x="8" y="0" width="1" height="4" fill="#3c3c3c"/><rect x="10" y="0" width="1" height="4" fill="#3c3c3c"/><rect x="12" y="0" width="1" height="4" fill="#3c3c3c"/><rect x="14" y="0" width="1" height="4" fill="#3c3c3c"/><rect x="16" y="0" width="1" height="4" fill="#3c3c3c"/><rect x="18" y="0" width="1" height="4" fill="#3c3c3c"/></svg>
<div style="left:8px;top:96px;width:31px;height:24px;background:#383838;border:1px solid #3f3f3f;border-radius:4px;box-sizing:border-box;"></div>
<svg style="left:15px;top:101px;" width="15" height="15" viewBox="0 0 15 15"><path d="M7.5 0 L10.2 3.2 L8.3 3.2 L8.3 6.7 L11.8 6.7 L11.8 4.8 L15 7.5 L11.8 10.2 L11.8 8.3 L8.3 8.3 L8.3 11.8 L10.2 11.8 L7.5 15 L4.8 11.8 L6.7 11.8 L6.7 8.3 L3.2 8.3 L3.2 10.2 L0 7.5 L3.2 4.8 L3.2 6.7 L6.7 6.7 L6.7 3.2 L4.8 3.2 Z" fill="#e2e2e2"/></svg>
<svg style="left:14px;top:126px;" width="18" height="16" viewBox="0 0 18 16"><ellipse cx="9" cy="8" rx="7.6" ry="6.6" fill="none" stroke="#d6d6d6" stroke-width="1.3" stroke-dasharray="4.2 1.8"/></svg>
<svg style="left:33px;top:140px;" width="3" height="3" viewBox="0 0 3 3"><path d="M3 0V3H0Z" fill="#c4c4c4"/></svg>
<svg style="left:15px;top:152px;" width="18" height="18" viewBox="0 0 18 18"><ellipse cx="9.5" cy="7" rx="7.6" ry="5.4" fill="none" stroke="#d6d6d6" stroke-width="1.4" transform="rotate(-12 9.5 7)"/><circle cx="3.6" cy="11.4" r="1.8" fill="none" stroke="#d6d6d6" stroke-width="1.1"/><path d="M4.6 13 C5.4 14.5 4.8 16 3.2 16.6" fill="none" stroke="#d6d6d6" stroke-width="1.2"/></svg>
<svg style="left:33px;top:166px;" width="3" height="3" viewBox="0 0 3 3"><path d="M3 0V3H0Z" fill="#c4c4c4"/></svg>
<svg style="left:13px;top:178px;" width="20" height="17" viewBox="0 0 20 17"><ellipse cx="6" cy="9" rx="4.8" ry="6" fill="none" stroke="#d6d6d6" stroke-width="1.3" stroke-dasharray="1.2 1.4"/><path d="M19.4 0.6 L14.6 9.6 L11.4 7.4 Z" fill="#d6d6d6"/><path d="M10.8 8 L14 10.2 C13.6 13.6 10.6 15 7 14.2 C9.2 12.8 8.6 9.6 10.8 8Z" fill="#d6d6d6"/></svg>
<svg style="left:33px;top:192px;" width="3" height="3" viewBox="0 0 3 3"><path d="M3 0V3H0Z" fill="#c4c4c4"/></svg>
<svg style="left:12px;top:203px;" width="7" height="8" viewBox="0 0 7 8"><path d="M1 2 L1.5 0 L3 1.5 L4.5 1 L6 2 V7 H1Z" fill="#8a8a8a"/><rect x="1" y="2" width="1" height="1" fill="#e8e8e8"/><rect x="2" y="2" width="1" height="1" fill="#222"/><rect x="3" y="2" width="1" height="1" fill="#e8e8e8"/><rect x="4" y="2" width="1" height="1" fill="#222"/><rect x="5" y="2" width="1" height="1" fill="#e8e8e8"/><rect x="1" y="3" width="1" height="1" fill="#222"/><rect x="2" y="3" width="1" height="1" fill="#e8e8e8"/><rect x="3" y="3" width="1" height="1" fill="#222"/><rect x="4" y="3" width="1" height="1" fill="#e8e8e8"/><rect x="5" y="3" width="1" height="1" fill="#222"/><rect x="1" y="4" width="1" height="1" fill="#e8e8e8"/><rect x="2" y="4" width="1" height="1" fill="#222"/><rect x="3" y="4" width="1" height="1" fill="#e8e8e8"/><rect x="4" y="4" width="1" height="1" fill="#222"/><rect x="5" y="4" width="1" height="1" fill="#e8e8e8"/><rect x="1" y="5" width="1" height="1" fill="#222"/><rect x="2" y="5" width="1" height="1" fill="#e8e8e8"/><rect x="3" y="5" width="1" height="1" fill="#222"/><rect x="4" y="5" width="1" height="1" fill="#e8e8e8"/><rect x="5" y="5" width="1" height="1" fill="#222"/><rect x="1" y="6" width="1" height="1" fill="#e8e8e8"/><rect x="2" y="6" width="1" height="1" fill="#222"/><rect x="3" y="6" width="1" height="1" fill="#e8e8e8"/><rect x="4" y="6" width="1" height="1" fill="#222"/><rect x="5" y="6" width="1" height="1" fill="#e8e8e8"/></svg>
<svg style="left:15px;top:203px;" width="18" height="18" viewBox="0 0 18 18"><path d="M13.2 0.8 C14.8 -0.2 17.4 2.2 16.4 4 L14.2 6.4 L15 7.2 L13.4 8.8 L8.4 3.8 L10 2.2 L10.8 3 Z" fill="#d6d6d6"/><path d="M10.6 6 L3.2 13.4 C2.4 14.2 1.6 15.6 2.2 16.2 C2.8 16.8 4.2 16 5 15.2 L12.4 7.8" fill="none" stroke="#d6d6d6" stroke-width="1.3"/></svg>
<svg style="left:15px;top:231px;" width="16" height="16" viewBox="0 0 16 16"><path d="M15.4 0.2 L9.8 10.4 L6.4 8 Z" fill="#d6d6d6"/><path d="M5.8 8.6 L9.2 11 C8.8 14.4 5.4 15.8 0.4 15 C3 13.6 2.8 10.2 5.8 8.6Z" fill="#d6d6d6"/></svg>
<svg style="left:33px;top:244px;" width="3" height="3" viewBox="0 0 3 3"><path d="M3 0V3H0Z" fill="#c4c4c4"/></svg>
<svg style="left:16px;top:257px;" width="15" height="16" viewBox="0 0 15 16"><circle cx="7.5" cy="3.4" r="3.2" fill="#d6d6d6"/><path d="M6 5.5 H9 L9.6 9.4 H13.6 V12.6 H1.4 V9.4 H5.4Z" fill="#d6d6d6"/><rect x="1.4" y="14" width="12.2" height="1.4" fill="#d6d6d6"/></svg>
<svg style="left:33px;top:270px;" width="3" height="3" viewBox="0 0 3 3"><path d="M3 0V3H0Z" fill="#c4c4c4"/></svg>
<svg style="left:12px;top:282px;" width="20" height="16" viewBox="0 0 20 16"><path d="M3.5 1.5 V6.5 M1 4 H6 M10 0 V4 M8 2 H12 M2.5 8 V12 M0.5 10 H4.5" stroke="#d6d6d6" stroke-width="1.1" fill="none"/><path d="M14.4 4 L18.8 8.4 L12 15.2 H8 L5.6 12.8 Z" fill="#d6d6d6"/><path d="M7.8 12.8 L10.4 10.2 L12.4 12.2 L10.4 14.2 H9.2Z" fill="#535353"/></svg>
<svg style="left:33px;top:296px;" width="3" height="3" viewBox="0 0 3 3"><path d="M3 0V3H0Z" fill="#c4c4c4"/></svg>
<svg style="left:12px;top:307px;" width="7" height="8" viewBox="0 0 7 8"><path d="M1 2 L1.5 0 L3 1.5 L4.5 1 L6 2 V7 H1Z" fill="#8a8a8a"/><rect x="1" y="2" width="1" height="1" fill="#e8e8e8"/><rect x="2" y="2" width="1" height="1" fill="#222"/><rect x="3" y="2" width="1" height="1" fill="#e8e8e8"/><rect x="4" y="2" width="1" height="1" fill="#222"/><rect x="5" y="2" width="1" height="1" fill="#e8e8e8"/><rect x="1" y="3" width="1" height="1" fill="#222"/><rect x="2" y="3" width="1" height="1" fill="#e8e8e8"/><rect x="3" y="3" width="1" height="1" fill="#222"/><rect x="4" y="3" width="1" height="1" fill="#e8e8e8"/><rect x="5" y="3" width="1" height="1" fill="#222"/><rect x="1" y="4" width="1" height="1" fill="#e8e8e8"/><rect x="2" y="4" width="1" height="1" fill="#222"/><rect x="3" y="4" width="1" height="1" fill="#e8e8e8"/><rect x="4" y="4" width="1" height="1" fill="#222"/><rect x="5" y="4" width="1" height="1" fill="#e8e8e8"/><rect x="1" y="5" width="1" height="1" fill="#222"/><rect x="2" y="5" width="1" height="1" fill="#e8e8e8"/><rect x="3" y="5" width="1" height="1" fill="#222"/><rect x="4" y="5" width="1" height="1" fill="#e8e8e8"/><rect x="5" y="5" width="1" height="1" fill="#222"/><rect x="1" y="6" width="1" height="1" fill="#e8e8e8"/><rect x="2" y="6" width="1" height="1" fill="#222"/><rect x="3" y="6" width="1" height="1" fill="#e8e8e8"/><rect x="4" y="6" width="1" height="1" fill="#222"/><rect x="5" y="6" width="1" height="1" fill="#e8e8e8"/></svg>
<svg style="left:18px;top:309px;" width="17" height="16" viewBox="0 0 17 16"><path d="M6.6 1.8 L13.6 8.8 L7.2 15.2 L0.8 8.8 Z" fill="none" stroke="#d6d6d6" stroke-width="1.4"/><path d="M4.6 0.6 C6 2.2 7.6 4.8 7.8 7.4" fill="none" stroke="#d6d6d6" stroke-width="1.3"/><ellipse cx="14.6" cy="12" rx="1.7" ry="2.3" fill="#d6d6d6"/><path d="M6.6 1.8 L13.6 8.8 L10 8.8 L5 3.4Z" fill="#d6d6d6" opacity=".55"/></svg>
<div class="ti" style="left:17.43px;top:332.70px;font-size:19.18px;line-height:19.18px;height:19.18px;font-family:'DejaVu Serif',serif;font-weight:bold;color:#e4e4e4;white-space:nowrap;transform:scaleX(0.912);transform-origin:0 0;">T</div>
<svg style="left:33px;top:348px;" width="3" height="3" viewBox="0 0 3 3"><path d="M3 0V3H0Z" fill="#c4c4c4"/></svg>
<svg style="left:15px;top:360px;" width="17" height="17" viewBox="0 0 17 17"><path d="M10.6 0.6 L15.8 5 L13.8 7.4 L8.6 3Z" fill="#d6d6d6"/><path d="M8.2 3.8 L13.2 8 C12.4 11.6 9.6 14 1.2 15.8 C2.4 9.6 4 5.6 8.2 3.8Z" fill="none" stroke="#d6d6d6" stroke-width="1.3"/><path d="M1.6 15.4 L7.2 9.6" stroke="#d6d6d6" stroke-width="1"/><circle cx="7.6" cy="9.2" r="1.3" fill="#d6d6d6"/></svg>
<svg style="left:33px;top:374px;" width="3" height="3" viewBox="0 0 3 3"><path d="M3 0V3H0Z" fill="#c4c4c4"/></svg>
<svg style="left:18px;top:386px;" width="12" height="18" viewBox="0 0 12 18"><path d="M1 0.8 V13.6 L4.2 10.6 L6.6 16.4 L8.8 15.4 L6.4 9.8 L10.8 9.6 Z" fill="#111" stroke="#d8d8d8" stroke-width="1"/></svg>
<svg style="left:33px;top:400px;" width="3" height="3" viewBox="0 0 3 3"><path d="M3 0V3H0Z" fill="#c4c4c4"/></svg>
<svg style="left:15px;top:413px;" width="17" height="14" viewBox="0 0 17 14"><rect x="0.75" y="0.75" width="15.5" height="12.5" fill="#6a6a6a" stroke="#d6d6d6" stroke-width="1.5"/></svg>
<svg style="left:33px;top:426px;" width="3" height="3" viewBox="0 0 3 3"><path d="M3 0V3H0Z" fill="#c4c4c4"/></svg>
<svg style="left:15px;top:438px;" width="17" height="17" viewBox="0 0 17 17"><path d="M5.2 8.4 V2.6 C5.2 1.6 6.8 1.6 6.8 2.6 V7.4 L7.4 7.4 V1.4 C7.4 0.3 9.1 0.3 9.1 1.4 V7.4 L9.7 7.4 V2.2 C9.7 1.2 11.3 1.2 11.3 2.2 V8 L11.9 8 V4.4 C11.9 3.4 13.5 3.4 13.5 4.4 V10.4 C13.5 14 11.6 16.6 8.6 16.6 C5.6 16.6 4.4 14.8 0.6 10 C0 9 1.2 8 2.2 8.8 L5.2 11.4 Z" fill="#d6d6d6"/></svg>
<svg style="left:33px;top:452px;" width="3" height="3" viewBox="0 0 3 3"><path d="M3 0V3H0Z" fill="#c4c4c4"/></svg>
<svg style="left:15px;top:464px;" width="17" height="17" viewBox="0 0 17 17"><circle cx="7" cy="7" r="5.9" fill="none" stroke="#d6d6d6" stroke-width="1.5"/><path d="M11.2 11.2 L16 16" stroke="#d6d6d6" stroke-width="2.2"/><path d="M5.6 3.6 C7.4 3.2 9 4 9.8 5.6" fill="none" stroke="#9a9a9a" stroke-width="1"/></svg>
<svg style="left:15px;top:496px;" width="17" height="5" viewBox="0 0 17 5"><circle cx="2.2" cy="2.5" r="2" fill="#d6d6d6"/><circle cx="8.2" cy="2.5" r="2" fill="#d6d6d6"/><circle cx="14.2" cy="2.5" r="2" fill="#d6d6d6"/></svg>
<svg style="left:33px;top:504px;" width="3" height="3" viewBox="0 0 3 3"><path d="M3 0V3H0Z" fill="#c4c4c4"/></svg>
<svg style="left:8px;top:517px;" width="11" height="11" viewBox="0 0 11 11"><rect x="3.5" y="3.5" width="7" height="7" fill="#d8d8d8" stroke="#555" stroke-width="0"/><rect x="0.5" y="0.5" width="7" height="7" fill="#0a0a0a" stroke="#d0d0d0" stroke-width="1"/></svg>
<svg style="left:26px;top:516px;" width="11" height="11" viewBox="0 0 11 11"><path d="M0 3.5 L3.6 0.4 V2.7 H8.3 V7.4 H10.6 L7.5 11 L4.4 7.4 H6.7 V4.3 H3.6 V6.6Z" fill="#d6d6d6"/></svg>
<div style="left:19px;top:542px;width:19px;height:19px;background:#2e2e2e;"></div>
<div style="left:20px;top:543px;width:17px;height:17px;background:#e4e4e4;"></div>
<div style="left:21px;top:544px;width:15px;height:15px;background:#e8d2e8;"></div>
<div style="left:8px;top:532px;width:20px;height:20px;background:#ffffff;border:1px solid #2e2e2e;box-sizing:border-box;"></div>
<svg style="left:14px;top:573px;" width="17" height="13" viewBox="0 0 17 13"><rect x="0.6" y="0.6" width="15.8" height="11.8" fill="none" stroke="#d6d6d6" stroke-width="1.2"/><circle cx="8.5" cy="6.5" r="3.4" fill="none" stroke="#d6d6d6" stroke-width="1.1" stroke-dasharray="1.1 1.1"/></svg>
<svg style="left:14px;top:599px;" width="17" height="14" viewBox="0 0 17 14"><rect x="5.6" y="0.6" width="10.8" height="8.8" fill="#535353" stroke="#d6d6d6" stroke-width="1.2"/><rect x="0.6" y="4.2" width="10.8" height="8.8" fill="#535353" stroke="#d6d6d6" stroke-width="1.2"/></svg>
<svg style="left:33px;top:612px;" width="3" height="3" viewBox="0 0 3 3"><path d="M3 0V3H0Z" fill="#c4c4c4"/></svg>
<div style="left:995px;top:67px;width:408px;height:11px;background:#424242;"></div>
<svg style="left:1389px;top:70px;" width="8" height="6" viewBox="0 0 8 6"><path d="M0 0 L3.8 3 L0 6 L1 3 Z M4.2 0 L8 3 L4.2 6 L5.2 3 Z" fill="#cfcfcf"/></svg>
<div style="left:1403px;top:78px;width:3px;height:853px;background:#464646;"></div>
<div style="left:1403px;top:78px;width:1px;height:853px;background:#3a3a3a;"></div>
<div style="left:1405px;top:78px;width:1px;height:853px;background:#3a3a3a;"></div>
<div style="left:995px;top:78px;width:408px;height:1px;background:#383838;"></div>
<div style="left:995px;top:79px;width:408px;height:28px;background:#424242;"></div>
<div style="left:995px;top:79px;width:64px;height:29px;background:#535353;"></div>
<div class="t" style="left:995.5px;top:85px;height:18px;line-height:18px;color:#e8e8e8;font-size:11px;white-space:nowrap;width:64px;text-align:center;letter-spacing:0.5px">历史记录</div>
<div style="left:1059px;top:79px;width:1px;height:28px;background:#383838;"></div>
<svg style="left:1386.5px;top:89px;" width="11" height="8" viewBox="0 0 11 8"><rect x="0" y="0" width="11" height="1" fill="#c8c8c8"/><rect x="0" y="2" width="11" height="1" fill="#c8c8c8"/><rect x="0" y="4" width="11" height="1" fill="#c8c8c8"/><rect x="0" y="6" width="11" height="1" fill="#c8c8c8"/></svg>
<div style="left:995px;top:107px;width:408px;height:378px;background:#4f4f4f;"></div>
<div style="left:995px;top:107px;width:392px;height:125px;background:#535353;"></div>
<div style="left:1387px;top:112px;width:16px;height:373px;background:#4a4a4a;"></div>
<svg style="left:1000px;top:118px;" width="15" height="14" viewBox="0 0 15 14"><path d="M14.6 0.2 L9.8 8.8 L6.8 6.6 Z" fill="#dadada"/><path d="M6.2 7.2 L9.2 9.4 C8.8 12.6 5.8 14 1.6 13.4 C3.8 12 3.6 8.8 6.2 7.2Z" fill="#dadada"/><path d="M0 4.2 L3.6 1.2 L3.8 2.6 C5.4 2 7.4 2 8.6 2.8 C7 2.8 5.4 3.4 4.2 4.2 L4.6 5.6Z" fill="#dadada"/><path d="M13 6 C14.8 8.8 13.8 12 10.6 13.4" fill="none" stroke="#dadada" stroke-width="1.1" stroke-dasharray="1 1.3"/></svg>
<div style="left:1020px;top:114px;width:32px;height:20px;background:#000;border:1px solid #3c3c3c;box-sizing:border-box;"></div>
<div class="t" style="left:1058px;top:115px;height:18px;line-height:18px;color:#e0e0e0;font-size:12px;white-space:nowrap;letter-spacing:-0.2px">未标题<span style="font-family:'Liberation Serif',serif">-1</span></div>
<div style="left:995px;top:138px;width:392px;height:1px;background:#6e6e6e;"></div>
<div style="left:1001px;top:146px;width:12px;height:12px;background:#4b4b4b;border:1px solid;border-color:#505050 #6a6a6a #6a6a6a #505050;box-sizing:border-box;"></div>
<svg style="left:1027px;top:145px;" width="14" height="15" viewBox="0 0 14 15"><path d="M0.6 2 H13.4 V14.4 H0.6Z" fill="none" stroke="#e4e4e4" stroke-width="1.2"/><path d="M0 0 H8.6 L9.8 1.6 H0Z" fill="#e4e4e4"/><rect x="3" y="5" width="8" height="1" fill="#e4e4e4"/><rect x="3" y="7" width="8" height="1" fill="#e4e4e4"/><rect x="3" y="9" width="8" height="1" fill="#e4e4e4"/><rect x="3" y="11" width="8" height="1" fill="#e4e4e4"/></svg>
<div class="t" style="left:1054px;top:143px;height:18px;line-height:18px;color:#e6e6e6;font-size:12px;white-space:nowrap;letter-spacing:-0.2px">新建</div>
<div style="left:995px;top:163px;width:392px;height:1px;background:#474747;"></div>
<div style="left:1001px;top:169px;width:12px;height:12px;background:#4b4b4b;border:1px solid;border-color:#505050 #6a6a6a #6a6a6a #505050;box-sizing:border-box;"></div>
<svg style="left:1027px;top:168px;" width="14" height="15" viewBox="0 0 14 15"><path d="M0.6 2 H13.4 V14.4 H0.6Z" fill="none" stroke="#e4e4e4" stroke-width="1.2"/><path d="M0 0 H8.6 L9.8 1.6 H0Z" fill="#e4e4e4"/><rect x="3" y="5" width="8" height="1" fill="#e4e4e4"/><rect x="3" y="7" width="8" height="1" fill="#e4e4e4"/><rect x="3" y="9" width="8" height="1" fill="#e4e4e4"/><rect x="3" y="11" width="8" height="1" fill="#e4e4e4"/></svg>
<div class="t" style="left:1054px;top:166px;height:18px;line-height:18px;color:#e6e6e6;font-size:12px;white-space:nowrap;letter-spacing:-0.2px">建立图层</div>
<div style="left:995px;top:186px;width:392px;height:1px;background:#474747;"></div>
<div style="left:1001px;top:192px;width:12px;height:12px;background:#4b4b4b;border:1px solid;border-color:#505050 #6a6a6a #6a6a6a #505050;box-sizing:border-box;"></div>
<svg style="left:1027px;top:191px;" width="14" height="15" viewBox="0 0 14 15"><path d="M0.6 2 H13.4 V14.4 H0.6Z" fill="none" stroke="#e4e4e4" stroke-width="1.2"/><path d="M0 0 H8.6 L9.8 1.6 H0Z" fill="#e4e4e4"/><rect x="3" y="5" width="8" height="1" fill="#e4e4e4"/><rect x="3" y="7" width="8" height="1" fill="#e4e4e4"/><rect x="3" y="9" width="8" height="1" fill="#e4e4e4"/><rect x="3" y="11" width="8" height="1" fill="#e4e4e4"/></svg>
<div class="t" style="left:1054px;top:189px;height:18px;line-height:18px;color:#e6e6e6;font-size:12px;white-space:nowrap;letter-spacing:-0.2px">新建渐变填充图层</div>
<div style="left:995px;top:209px;width:392px;height:1px;background:#474747;"></div>
<div style="left:995px;top:209px;width:392px;height:23px;background:#6a6a6a;"></div>
<div style="left:1001px;top:215px;width:12px;height:12px;background:#5e5e5e;border:1px solid;border-color:#646464 #808080 #808080 #646464;box-sizing:border-box;"></div>
<svg style="left:1027px;top:214px;" width="14" height="15" viewBox="0 0 14 15"><path d="M0.6 2 H13.4 V14.4 H0.6Z" fill="none" stroke="#e4e4e4" stroke-width="1.2"/><path d="M0 0 H8.6 L9.8 1.6 H0Z" fill="#e4e4e4"/><rect x="3" y="5" width="8" height="1" fill="#e4e4e4"/><rect x="3" y="7" width="8" height="1" fill="#e4e4e4"/><rect x="3" y="9" width="8" height="1" fill="#e4e4e4"/><rect x="3" y="11" width="8" height="1" fill="#e4e4e4"/></svg>
<div class="t" style="left:1054px;top:212px;height:18px;line-height:18px;color:#ffffff;font-size:12px;white-space:nowrap;letter-spacing:-0.2px">总体不透明度更改</div>
<div style="left:995px;top:485px;width:408px;height:1px;background:#383838;"></div>
<div style="left:995px;top:486px;width:408px;height:24px;background:#535353;"></div>
<svg style="left:1301px;top:492px;" width="15" height="12" viewBox="0 0 15 12"><path d="M6 0 H11 L14.4 3.4 V10 H6Z" fill="#cfcfcf"/><path d="M11 0 L14.4 3.4 H11Z" fill="#9a9a9a"/><path d="M1.8 4.8 H6.6 V9 H1.8Z" fill="#535353"/><path d="M3.4 4.6 H5.6 V6.8 H8 V9 H5.6 V11.4 H3.4 V9 H0.4 V6.8 H3.4Z" fill="#cfcfcf"/></svg>
<svg style="left:1334px;top:492px;" width="13" height="10.3" viewBox="0 0 14 11"><path d="M0 2 H3.6 L4.6 0.4 H9.4 L10.4 2 H14 V11 H0Z" fill="#cfcfcf"/><circle cx="7" cy="6.3" r="2.9" fill="#535353"/><circle cx="7" cy="6.3" r="1.6" fill="#cfcfcf"/></svg>
<svg style="left:1363px;top:492px;" width="11" height="12.5" viewBox="0 0 13 14"><path d="M4.5 0.5 H8.5 V2 H12.5 V3.4 H0.5 V2 H4.5Z" fill="#cfcfcf"/><path d="M1.6 4.4 H11.4 L10.8 13.5 H2.2Z" fill="none" stroke="#cfcfcf" stroke-width="1.3"/><path d="M4.6 5.5V12 M6.5 5.5V12 M8.4 5.5V12" stroke="#cfcfcf" stroke-width="1.1"/></svg>
<div style="left:995px;top:510px;width:408px;height:3px;background:#464646;"></div>
<div style="left:995px;top:510px;width:408px;height:1px;background:#3a3a3a;"></div>
<div style="left:995px;top:512px;width:408px;height:1px;background:#3a3a3a;"></div>
<div style="left:995px;top:513px;width:408px;height:28px;background:#424242;"></div>
<div style="left:995px;top:513px;width:41px;height:29px;background:#535353;"></div>
<div class="t" style="left:995.5px;top:518px;height:18px;line-height:18px;color:#e8e8e8;font-size:11px;white-space:nowrap;width:41px;text-align:center;letter-spacing:0.5px">信息</div>
<div style="left:1036px;top:513px;width:1px;height:28px;background:#383838;"></div>
<svg style="left:1386.5px;top:523px;" width="11" height="8" viewBox="0 0 11 8"><rect x="0" y="0" width="11" height="1" fill="#c8c8c8"/><rect x="0" y="2" width="11" height="1" fill="#c8c8c8"/><rect x="0" y="4" width="11" height="1" fill="#c8c8c8"/><rect x="0" y="6" width="11" height="1" fill="#c8c8c8"/></svg>
<div style="left:995px;top:541px;width:408px;height:4px;background:#464646;"></div>
<div style="left:995px;top:541px;width:408px;height:1px;background:#3a3a3a;"></div>
<div style="left:995px;top:544px;width:408px;height:1px;background:#3a3a3a;"></div>
<div style="left:995px;top:545px;width:408px;height:28px;background:#424242;"></div>
<div style="left:995px;top:545px;width:40px;height:29px;background:#535353;"></div>
<div class="t" style="left:995.5px;top:550px;height:18px;line-height:18px;color:#e8e8e8;font-size:11px;white-space:nowrap;width:40px;text-align:center;letter-spacing:0.5px">画笔</div>
<div style="left:1035px;top:545px;width:1px;height:28px;background:#383838;"></div>
<div class="t" style="left:1035.5px;top:550px;height:18px;line-height:18px;color:#a2a2a2;font-size:11px;white-space:nowrap;width:64px;text-align:center;letter-spacing:0.5px">画笔预设</div>
<div style="left:1099px;top:545px;width:1px;height:28px;background:#383838;"></div>
<svg style="left:1386.5px;top:555px;" width="11" height="8" viewBox="0 0 11 8"><rect x="0" y="0" width="11" height="1" fill="#c8c8c8"/><rect x="0" y="2" width="11" height="1" fill="#c8c8c8"/><rect x="0" y="4" width="11" height="1" fill="#c8c8c8"/><rect x="0" y="6" width="11" height="1" fill="#c8c8c8"/></svg>
<div style="left:995px;top:573px;width:408px;height:4px;background:#464646;"></div>
<div style="left:995px;top:573px;width:408px;height:1px;background:#3a3a3a;"></div>
<div style="left:995px;top:576px;width:408px;height:1px;background:#3a3a3a;"></div>
<div style="left:995px;top:577px;width:408px;height:27px;background:#424242;"></div>
<div style="left:995px;top:577px;width:41px;height:28px;background:#535353;"></div>
<div class="t" style="left:995.5px;top:582px;height:18px;line-height:18px;color:#e8e8e8;font-size:11px;white-space:nowrap;width:41px;text-align:center;letter-spacing:0.5px">字符</div>
<div style="left:1036px;top:577px;width:1px;height:27px;background:#383838;"></div>
<div class="t" style="left:1036.5px;top:582px;height:18px;line-height:18px;color:#a2a2a2;font-size:11px;white-space:nowrap;width:41px;text-align:center;letter-spacing:0.5px">段落</div>
<div style="left:1077px;top:577px;width:1px;height:27px;background:#383838;"></div>
<svg style="left:1386.5px;top:587px;" width="11" height="8" viewBox="0 0 11 8"><rect x="0" y="0" width="11" height="1" fill="#c8c8c8"/><rect x="0" y="2" width="11" height="1" fill="#c8c8c8"/><rect x="0" y="4" width="11" height="1" fill="#c8c8c8"/><rect x="0" y="6" width="11" height="1" fill="#c8c8c8"/></svg>
<div style="left:995px;top:605px;width:408px;height:262px;background:#535353;"></div>
<div style="left:1002px;top:614px;width:121px;height:21px;background:#454545;border:1px solid #626262;border-radius:3px;box-sizing:border-box;"></div>
<div style="left:1106px;top:615px;width:1px;height:19px;background:#626262;"></div>
<svg style="left:1110px;top:622px;" width="8" height="5" viewBox="0 0 8 5"><path d="M0.5 0.5 L4.0 4.3 L7.5 0.5" fill="none" stroke="#d0d0d0" stroke-width="1.0"/></svg>
<div class="t" style="left:1004.5px;top:616px;height:19px;line-height:19px;color:#f4f4f4;font-size:12px;white-space:nowrap;letter-spacing:-0.5px">Adobe 黑体 Std</div>
<div style="left:1133px;top:614px;width:75px;height:21px;background:#484848;border:1px solid #4e4e4e;border-radius:3px;box-sizing:border-box;"></div>
<div style="left:1191px;top:615px;width:1px;height:19px;background:#4e4e4e;"></div>
<svg style="left:1195px;top:622px;" width="8" height="5" viewBox="0 0 8 5"><path d="M0.5 0.5 L4.0 4.3 L7.5 0.5" fill="none" stroke="#5e5e5e" stroke-width="1.0"/></svg>
<div style="left:1137px;top:617px;width:50px;height:15px;background:#404040;"></div>
<div style="left:1141px;top:624px;width:3px;height:1px;background:#5a5a5a;"></div>
<div class="ti" style="left:996.92px;top:654.01px;font-size:8.22px;line-height:8.22px;height:8.22px;font-family:'DejaVu Serif',serif;font-weight:bold;color:#e2e2e2;white-space:nowrap;transform:scaleX(0.929);transform-origin:0 0;">T</div>
<div class="ti" style="left:1000.82px;top:645.86px;font-size:17.81px;line-height:17.81px;height:17.81px;font-family:'DejaVu Serif',serif;font-weight:bold;color:#e2e2e2;white-space:nowrap;transform:scaleX(1.014);transform-origin:0 0;">T</div>
<div style="left:1017px;top:644px;width:86px;height:21px;background:#454545;border:1px solid #626262;border-radius:3px;box-sizing:border-box;"></div>
<div style="left:1086px;top:645px;width:1px;height:19px;background:#626262;"></div>
<svg style="left:1090px;top:652px;" width="8" height="5" viewBox="0 0 8 5"><path d="M0.5 0.5 L4.0 4.3 L7.5 0.5" fill="none" stroke="#d0d0d0" stroke-width="1.0"/></svg>
<div class="t" style="left:1020px;top:646px;height:19px;line-height:19px;color:#f0f0f0;font-size:12px;white-space:nowrap;letter-spacing:-0.3px">80 点</div>
<svg style="left:1110px;top:646px;" width="17" height="17" viewBox="0 0 17 17"><path d="M2.5 4 L5 6.6 H3.1 V11.4 H5 L2.5 14 L0 11.4 H1.9 V6.6 H0Z" fill="#dcdcdc"/><path d="M7 7.2 H16.4 M7 16.2 H16.4" stroke="#dcdcdc" stroke-width="1"/><path d="M8.6 6.4 L11.6 0.6 L14.6 6.4 M9.8 4.4 H13.4" fill="none" stroke="#dcdcdc" stroke-width="1"/><path d="M8.6 15.4 L11.6 9.6 L14.6 15.4 M9.8 13.4 H13.4" fill="none" stroke="#dcdcdc" stroke-width="1"/></svg>
<div style="left:1130px;top:644px;width:80px;height:21px;background:#454545;border:1px solid #626262;border-radius:3px;box-sizing:border-box;"></div>
<div style="left:1193px;top:645px;width:1px;height:19px;background:#626262;"></div>
<svg style="left:1197px;top:652px;" width="8" height="5" viewBox="0 0 8 5"><path d="M0.5 0.5 L4.0 4.3 L7.5 0.5" fill="none" stroke="#d0d0d0" stroke-width="1.0"/></svg>
<div class="t" style="left:1133px;top:646px;height:19px;line-height:19px;color:#f0f0f0;font-size:12px;white-space:nowrap;letter-spacing:-0.3px">(自动)</div>
<div class="t" style="left:996px;top:670px;height:14px;line-height:14px;color:#dcdcdc;font-size:13px;white-space:nowrap;font-family:'Liberation Sans',sans-serif;letter-spacing:-1.2px;">V/A</div>
<svg style="left:1006px;top:683px;" width="9" height="5" viewBox="0 0 9 5"><path d="M0 2.5 L3.5 0 V5Z M3 2 H9 V3 H3Z" fill="#dcdcdc"/></svg>
<div style="left:1017px;top:668px;width:86px;height:21px;background:#454545;border:1px solid #626262;border-radius:3px;box-sizing:border-box;"></div>
<div style="left:1086px;top:669px;width:1px;height:19px;background:#626262;"></div>
<svg style="left:1090px;top:676px;" width="8" height="5" viewBox="0 0 8 5"><path d="M0.5 0.5 L4.0 4.3 L7.5 0.5" fill="none" stroke="#d0d0d0" stroke-width="1.0"/></svg>
<div style="left:1110px;top:670px;width:18px;height:12px;background:#d8d8d8;"></div>
<div class="t" style="left:1110px;top:669px;height:14px;line-height:14px;color:#3a3a3a;font-size:12px;white-space:nowrap;font-family:'Liberation Sans',sans-serif;letter-spacing:-1.2px;width:18px;text-align:center;font-weight:bold;">VA</div>
<svg style="left:1110px;top:683px;" width="18" height="6" viewBox="0 0 18 6"><path d="M0 3 L3 0.4 V5.6Z M18 3 L15 0.4 V5.6Z M2.5 2.5 H15.5 V3.5 H2.5Z" fill="#dcdcdc"/></svg>
<div style="left:1130px;top:668px;width:80px;height:21px;background:#454545;border:1px solid #626262;border-radius:3px;box-sizing:border-box;"></div>
<div style="left:1193px;top:669px;width:1px;height:19px;background:#626262;"></div>
<svg style="left:1197px;top:676px;" width="8" height="5" viewBox="0 0 8 5"><path d="M0.5 0.5 L4.0 4.3 L7.5 0.5" fill="none" stroke="#d0d0d0" stroke-width="1.0"/></svg>
<div class="t" style="left:1133px;top:670px;height:19px;line-height:19px;color:#f0f0f0;font-size:12px;white-space:nowrap;letter-spacing:-0.3px">0</div>
<svg style="left:999px;top:699px;" width="14" height="12" viewBox="0 0 14 12"><path d="M1.5 0V12 M12.5 0V12" stroke="#c8c8c8" stroke-width="1" stroke-dasharray="1 1" fill="none"/></svg>
<div class="t" style="left:1001px;top:699px;height:12px;line-height:12px;color:#dcdcdc;font-size:10px;white-space:nowrap;width:10px;text-align:center;font-family:'Noto Sans CJK JP',sans-serif;">あ</div>
<svg style="left:999px;top:710px;" width="14" height="5" viewBox="0 0 14 5"><path d="M0 2 H3.4 V0.2 L6 2.5 L3.4 4.8 V3 H0Z M14 2 H10.6 V0.2 L8 2.5 L10.6 4.8 V3 H14Z" fill="#dcdcdc"/></svg>
<div style="left:1017px;top:697px;width:82px;height:21px;background:#454545;border:1px solid #626262;border-radius:3px;box-sizing:border-box;"></div>
<div style="left:1082px;top:698px;width:1px;height:19px;background:#626262;"></div>
<svg style="left:1086px;top:705px;" width="8" height="5" viewBox="0 0 8 5"><path d="M0.5 0.5 L4.0 4.3 L7.5 0.5" fill="none" stroke="#d0d0d0" stroke-width="1.0"/></svg>
<div class="t" style="left:1020px;top:699px;height:19px;line-height:19px;color:#f0f0f0;font-size:12px;white-space:nowrap;letter-spacing:-0.3px">0%</div>
<svg style="left:997px;top:728px;" width="6" height="13" viewBox="0 0 6 13"><path d="M3 0 L5.8 3.2 H3.6 V9.8 H5.8 L3 13 L0.2 9.8 H2.4 V3.2 H0.2Z" fill="#e0e0e0"/></svg>
<div class="ti" style="left:1004.86px;top:727.53px;font-size:16.44px;line-height:16.44px;height:16.44px;font-family:'DejaVu Serif',serif;font-weight:bold;color:#e2e2e2;white-space:nowrap;transform:scaleX(0.845);transform-origin:0 0;">T</div>
<div style="left:1018px;top:726px;width:56px;height:19px;background:#454545;border:1px solid #636363;box-sizing:border-box;"></div>
<div class="t" style="left:1020px;top:727px;height:18px;line-height:18px;color:#f0f0f0;font-size:12px;white-space:nowrap;letter-spacing:-0.3px">100%</div>
<div class="ti" style="left:1130.83px;top:727.36px;font-size:13.70px;line-height:13.70px;height:13.70px;font-family:'DejaVu Serif',serif;font-weight:bold;color:#e2e2e2;white-space:nowrap;transform:scaleX(1.267);transform-origin:0 0;">T</div>
<svg style="left:1128px;top:739px;" width="18" height="5" viewBox="0 0 18 5"><path d="M0 2.5 L3.2 0 V2 H14.8 V0 L18 2.5 L14.8 5 V3 H3.2 V5Z" fill="#e0e0e0"/></svg>
<div style="left:1149px;top:726px;width:56px;height:19px;background:#454545;border:1px solid #636363;box-sizing:border-box;"></div>
<div class="t" style="left:1151px;top:727px;height:18px;line-height:18px;color:#f0f0f0;font-size:12px;white-space:nowrap;letter-spacing:-0.3px">100%</div>
<div class="t" style="left:998px;top:750px;height:14px;line-height:14px;color:#dcdcdc;font-size:13px;white-space:nowrap;font-family:'Liberation Sans',sans-serif;">A</div>
<div style="left:998px;top:762px;width:9px;height:1px;background:#dcdcdc;"></div>
<div class="t" style="left:1007px;top:749px;height:10px;line-height:10px;color:#dcdcdc;font-size:8px;white-space:nowrap;font-family:'Liberation Sans',sans-serif;">a</div>
<div style="left:1007px;top:758px;width:5px;height:1px;background:#dcdcdc;"></div>
<svg style="left:1008px;top:760px;" width="5" height="7" viewBox="0 0 5 7"><path d="M2.5 0 L5 2.8 H3 V7 H2 V2.8 H0Z" fill="#dcdcdc"/></svg>
<div style="left:1018px;top:749px;width:56px;height:19px;background:#454545;border:1px solid #636363;box-sizing:border-box;"></div>
<div class="t" style="left:1020px;top:750px;height:18px;line-height:18px;color:#f0f0f0;font-size:12px;white-space:nowrap;letter-spacing:-0.3px">0 点</div>
<div class="t" style="left:1114px;top:751px;height:18px;line-height:18px;color:#e0e0e0;font-size:12px;white-space:nowrap;letter-spacing:0px">颜色：</div>
<div style="left:1149px;top:749px;width:56px;height:21px;background:#ffffff;border:1px solid #2e2e2e;box-sizing:border-box;"></div>
<div class="ti" style="left:1014.83px;top:784.36px;font-size:13.70px;line-height:13.70px;height:13.70px;font-family:'DejaVu Serif',serif;font-weight:bold;color:#e2e2e2;white-space:nowrap;transform:scaleX(1.217);transform-origin:0 0;">T</div>
<div class="ti" style="left:1039.24px;top:784.36px;font-size:13.70px;line-height:13.70px;height:13.70px;font-family:'DejaVu Serif',serif;font-weight:bold;color:#e2e2e2;white-space:nowrap;transform:scaleX(1.115);transform-origin:0 0;font-style:italic;font-weight:normal;">T</div>
<div class="ti" style="left:1059.88px;top:784.36px;font-size:13.70px;line-height:13.70px;height:13.70px;font-family:'DejaVu Serif',serif;font-weight:bold;color:#e2e2e2;white-space:nowrap;transform:scaleX(0.842);transform-origin:0 0;">T</div>
<div class="ti" style="left:1068.58px;top:784.36px;font-size:13.70px;line-height:13.70px;height:13.70px;font-family:'DejaVu Serif',serif;font-weight:bold;color:#e2e2e2;white-space:nowrap;transform:scaleX(0.842);transform-origin:0 0;">T</div>
<div class="ti" style="left:1084.87px;top:784.36px;font-size:13.70px;line-height:13.70px;height:13.70px;font-family:'DejaVu Serif',serif;font-weight:bold;color:#e2e2e2;white-space:nowrap;transform:scaleX(0.963);transform-origin:0 0;">T</div>
<div class="ti" style="left:1094.42px;top:789.01px;font-size:8.22px;line-height:8.22px;height:8.22px;font-family:'DejaVu Serif',serif;font-weight:bold;color:#e2e2e2;white-space:nowrap;transform:scaleX(1.014);transform-origin:0 0;">T</div>
<div class="ti" style="left:1109.85px;top:784.36px;font-size:13.70px;line-height:13.70px;height:13.70px;font-family:'DejaVu Serif',serif;font-weight:bold;color:#e2e2e2;white-space:nowrap;transform:scaleX(1.065);transform-origin:0 0;">T</div>
<div class="ti" style="left:1120.93px;top:784.18px;font-size:6.85px;line-height:6.85px;height:6.85px;font-family:'DejaVu Serif',serif;font-weight:bold;color:#e2e2e2;white-space:nowrap;transform:scaleX(1.000);transform-origin:0 0;">1</div>
<div class="ti" style="left:1134.35px;top:784.36px;font-size:13.70px;line-height:13.70px;height:13.70px;font-family:'DejaVu Serif',serif;font-weight:bold;color:#e2e2e2;white-space:nowrap;transform:scaleX(1.065);transform-origin:0 0;">T</div>
<div class="ti" style="left:1144.43px;top:791.68px;font-size:6.85px;line-height:6.85px;height:6.85px;font-family:'DejaVu Serif',serif;font-weight:bold;color:#e2e2e2;white-space:nowrap;transform:scaleX(1.000);transform-origin:0 0;">1</div>
<div class="ti" style="left:1159.35px;top:784.36px;font-size:13.70px;line-height:13.70px;height:13.70px;font-family:'DejaVu Serif',serif;font-weight:bold;color:#e2e2e2;white-space:nowrap;transform:scaleX(1.115);transform-origin:0 0;">T</div>
<div style="left:1159px;top:797px;width:12px;height:1px;background:#e0e0e0;"></div>
<div class="ti" style="left:1183.85px;top:784.36px;font-size:13.70px;line-height:13.70px;height:13.70px;font-family:'DejaVu Serif',serif;font-weight:bold;color:#e2e2e2;white-space:nowrap;transform:scaleX(1.065);transform-origin:0 0;">T</div>
<div style="left:1183px;top:790px;width:12px;height:1.5px;background:#e0e0e0;"></div>
<div class="t" style="left:1016px;top:814px;font-size:17px;line-height:18px;height:18px;font-family:'Liberation Serif',serif;white-space:nowrap;color:#969696;">fi</div>
<div class="t" style="left:1041px;top:814px;font-size:17px;line-height:18px;height:18px;font-family:'Liberation Serif',serif;white-space:nowrap;color:#969696;font-style:italic;">o</div>
<svg style="left:1046px;top:818px;" width="9" height="8" viewBox="0 0 9 8"><path d="M0.5 6 C3 5 6.5 3 8.5 0.5" fill="none" stroke="#969696" stroke-width="1"/></svg>
<div class="t" style="left:1062px;top:814px;font-size:17px;line-height:18px;height:18px;font-family:'Liberation Serif',serif;white-space:nowrap;color:#dedede;font-weight:bold;font-size:16px;">st</div>
<svg style="left:1065px;top:815px;" width="7" height="4" viewBox="0 0 7 4"><path d="M0.5 3.5 C1 0.5 5.5 0.2 6.5 2.6" fill="none" stroke="#dedede" stroke-width="1.2"/></svg>
<div class="t" style="left:1086px;top:813px;font-size:19px;line-height:18px;height:18px;font-family:'Liberation Serif',serif;white-space:nowrap;color:#969696;font-style:italic;">A</div>
<svg style="left:1085px;top:826px;" width="6" height="4" viewBox="0 0 6 4"><path d="M0.5 0.5 C1 3 3 3.5 5.5 2" fill="none" stroke="#969696" stroke-width="1"/></svg>
<div class="t" style="left:1108px;top:815px;font-size:16px;line-height:18px;height:18px;font-family:'Liberation Serif',serif;white-space:nowrap;color:#969696;letter-spacing:-0.3px;font-weight:bold;font-size:15px;">aa</div>
<svg style="left:1109px;top:814px;" width="16" height="5" viewBox="0 0 16 5"><path d="M0 2.5 H14 M11.5 0.5 L14.5 2.5 L11.5 4.5" fill="none" stroke="#969696" stroke-width="1.2"/></svg>
<div class="t" style="left:1135px;top:813px;font-size:19px;line-height:18px;height:18px;font-family:'Liberation Serif',serif;white-space:nowrap;color:#969696;font-style:italic;">T</div>
<div class="t" style="left:1136.2px;top:813px;font-size:19px;line-height:18px;height:18px;font-family:'Liberation Serif',serif;white-space:nowrap;color:#969696;font-style:italic;opacity:.55;">T</div>
<div class="t" style="left:1158px;top:814px;font-size:17px;line-height:18px;height:18px;font-family:'Liberation Serif',serif;white-space:nowrap;color:#969696;">1</div>
<div class="t" style="left:1165px;top:810px;font-size:11px;line-height:18px;height:18px;font-family:'Liberation Serif',serif;white-space:nowrap;color:#969696;">st</div>
<div class="t" style="left:1182px;top:814px;font-size:17px;line-height:18px;height:18px;font-family:'Liberation Serif',serif;white-space:nowrap;color:#969696;">½</div>
<div style="left:1001px;top:842px;width:116px;height:21px;background:#454545;border:1px solid #626262;border-radius:3px;box-sizing:border-box;"></div>
<div class="t" style="left:1010px;top:845px;height:19px;line-height:19px;color:#f0f0f0;font-size:12px;white-space:nowrap;letter-spacing:-0.3px">美国英语</div>
<svg style="left:1104px;top:851px;" width="8" height="5" viewBox="0 0 8 5"><path d="M0.5 0.5 L4.0 4.3 L7.5 0.5" fill="none" stroke="#d0d0d0" stroke-width="1.0"/></svg>
<div class="t" style="left:1122px;top:843px;height:14px;line-height:14px;color:#dcdcdc;font-size:11px;white-space:nowrap;font-family:'Liberation Sans',sans-serif;">a</div>
<div class="t" style="left:1129px;top:847px;height:14px;line-height:14px;color:#dcdcdc;font-size:12px;white-space:nowrap;font-family:'Liberation Sans',sans-serif;">a</div>
<div style="left:1141px;top:842px;width:68px;height:21px;background:#454545;border:1px solid #626262;border-radius:3px;box-sizing:border-box;"></div>
<div class="t" style="left:1151px;top:845px;height:19px;line-height:19px;color:#f0f0f0;font-size:12px;white-space:nowrap;letter-spacing:-0.3px">平滑</div>
<svg style="left:1197px;top:851px;" width="8" height="5" viewBox="0 0 8 5"><path d="M0.5 0.5 L4.0 4.3 L7.5 0.5" fill="none" stroke="#d0d0d0" stroke-width="1.0"/></svg>
<div style="left:995px;top:867px;width:408px;height:3px;background:#464646;"></div>
<div style="left:995px;top:867px;width:408px;height:1px;background:#3a3a3a;"></div>
<div style="left:995px;top:869px;width:408px;height:1px;background:#3a3a3a;"></div>
<div style="left:995px;top:870px;width:408px;height:28px;background:#424242;"></div>
<div style="left:995px;top:870px;width:41px;height:29px;background:#535353;"></div>
<div class="t" style="left:995.5px;top:875px;height:18px;line-height:18px;color:#e8e8e8;font-size:11px;white-space:nowrap;width:41px;text-align:center;letter-spacing:0.5px">字形</div>
<div style="left:1036px;top:870px;width:1px;height:28px;background:#383838;"></div>
<svg style="left:1386.5px;top:880px;" width="11" height="8" viewBox="0 0 11 8"><rect x="0" y="0" width="11" height="1" fill="#c8c8c8"/><rect x="0" y="2" width="11" height="1" fill="#c8c8c8"/><rect x="0" y="4" width="11" height="1" fill="#c8c8c8"/><rect x="0" y="6" width="11" height="1" fill="#c8c8c8"/></svg>
<div style="left:995px;top:898px;width:408px;height:4px;background:#464646;"></div>
<div style="left:995px;top:898px;width:408px;height:1px;background:#3a3a3a;"></div>
<div style="left:995px;top:901px;width:408px;height:1px;background:#3a3a3a;"></div>
<div style="left:995px;top:902px;width:408px;height:28px;background:#424242;"></div>
<div style="left:995px;top:902px;width:32px;height:29px;background:#535353;"></div>
<div class="t" style="left:995.5px;top:907px;height:18px;line-height:18px;color:#e8e8e8;font-size:11px;white-space:nowrap;width:32px;text-align:center;letter-spacing:0.5px">3D</div>
<div style="left:1027px;top:902px;width:1px;height:28px;background:#383838;"></div>
<svg style="left:1386.5px;top:912px;" width="11" height="8" viewBox="0 0 11 8"><rect x="0" y="0" width="11" height="1" fill="#c8c8c8"/><rect x="0" y="2" width="11" height="1" fill="#c8c8c8"/><rect x="0" y="4" width="11" height="1" fill="#c8c8c8"/><rect x="0" y="6" width="11" height="1" fill="#c8c8c8"/></svg>
<div style="left:995px;top:930px;width:408px;height:1px;background:#3b3b3b;"></div>
<div style="left:1406px;top:67px;width:250px;height:11px;background:#424242;"></div>
<svg style="left:1643px;top:70px;" width="8" height="6" viewBox="0 0 8 6"><path d="M0 0 L3.8 3 L0 6 L1 3 Z M4.2 0 L8 3 L4.2 6 L5.2 3 Z" fill="#cfcfcf"/></svg>
<div style="left:1656px;top:78px;width:3px;height:853px;background:#464646;"></div>
<div style="left:1656px;top:78px;width:1px;height:853px;background:#3a3a3a;"></div>
<div style="left:1658px;top:78px;width:1px;height:853px;background:#3a3a3a;"></div>
<div style="left:1406px;top:78px;width:250px;height:1px;background:#383838;"></div>
<div style="left:1406px;top:79px;width:250px;height:28px;background:#424242;"></div>
<div class="t" style="left:1406.5px;top:85px;height:18px;line-height:18px;color:#a2a2a2;font-size:11px;white-space:nowrap;width:41px;text-align:center;letter-spacing:0.5px">颜色</div>
<div style="left:1447px;top:79px;width:1px;height:28px;background:#383838;"></div>
<div style="left:1447px;top:79px;width:40px;height:29px;background:#535353;"></div>
<div class="t" style="left:1447.5px;top:85px;height:18px;line-height:18px;color:#e8e8e8;font-size:11px;white-space:nowrap;width:40px;text-align:center;letter-spacing:0.5px">色板</div>
<div style="left:1487px;top:79px;width:1px;height:28px;background:#383838;"></div>
<svg style="left:1639.5px;top:89px;" width="11" height="8" viewBox="0 0 11 8"><rect x="0" y="0" width="11" height="1" fill="#c8c8c8"/><rect x="0" y="2" width="11" height="1" fill="#c8c8c8"/><rect x="0" y="4" width="11" height="1" fill="#c8c8c8"/><rect x="0" y="6" width="11" height="1" fill="#c8c8c8"/></svg>
<div style="left:1406px;top:107px;width:250px;height:30px;background:#535353;"></div>
<div style="left:1410px;top:115px;width:227px;height:19px;background:#424242;border-radius:2px;"></div>
<div style="left:1412px;top:117px;width:15px;height:15px;background:#e8d2e6;"></div>
<div style="left:1428px;top:117px;width:15px;height:15px;background:#000000;"></div>
<div style="left:1444px;top:117px;width:15px;height:15px;background:#ffffff;"></div>
<div style="left:1460px;top:117px;width:15px;height:15px;background:#999999;"></div>
<div style="left:1476px;top:117px;width:15px;height:15px;background:#c4d7e6;"></div>
<div style="left:1492px;top:117px;width:15px;height:15px;background:#c4d7e4;"></div>
<div style="left:1508px;top:117px;width:15px;height:15px;background:#23649f;"></div>
<div style="left:1524px;top:117px;width:15px;height:15px;background:#1f5a96;"></div>
<div style="left:1540px;top:117px;width:15px;height:15px;background:#27669f;"></div>
<div style="left:1556px;top:117px;width:15px;height:15px;background:#78a4c8;"></div>
<div style="left:1572px;top:117px;width:15px;height:15px;background:#1f5c98;"></div>
<div style="left:1588px;top:117px;width:15px;height:15px;background:#74a3c6;"></div>
<div style="left:1604px;top:117px;width:15px;height:15px;background:#78a6c8;"></div>
<div style="left:1620px;top:117px;width:15px;height:15px;background:#2a66a2;"></div>
<div style="left:1406px;top:137px;width:250px;height:199px;background:#4f4f4f;"></div>
<div style="left:1641px;top:137px;width:15px;height:199px;background:#525252;"></div>
<div style="left:1406px;top:138px;width:17px;height:17px;background:#ff0000;"></div>
<div style="left:1424px;top:138px;width:17px;height:17px;background:#ffff00;"></div>
<div style="left:1442px;top:138px;width:17px;height:17px;background:#00ff00;"></div>
<div style="left:1460px;top:138px;width:17px;height:17px;background:#00ffff;"></div>
<div style="left:1478px;top:138px;width:17px;height:17px;background:#0000ff;"></div>
<div style="left:1496px;top:138px;width:17px;height:17px;background:#ff00ff;"></div>
<div style="left:1514px;top:138px;width:17px;height:17px;background:#ffffff;"></div>
<div style="left:1532px;top:138px;width:17px;height:17px;background:#ececec;"></div>
<div style="left:1550px;top:138px;width:17px;height:17px;background:#e3e3e3;"></div>
<div style="left:1568px;top:138px;width:17px;height:17px;background:#dadada;"></div>
<div style="left:1586px;top:138px;width:17px;height:17px;background:#d2d2d2;"></div>
<div style="left:1604px;top:138px;width:17px;height:17px;background:#c9c9c9;"></div>
<div style="left:1622px;top:138px;width:17px;height:17px;background:#c0c0c0;"></div>
<div style="left:1406px;top:156px;width:17px;height:17px;background:#b6b6b6;"></div>
<div style="left:1424px;top:156px;width:17px;height:17px;background:#ababab;"></div>
<div style="left:1442px;top:156px;width:17px;height:17px;background:#a0a0a0;"></div>
<div style="left:1460px;top:156px;width:17px;height:17px;background:#e60012;"></div>
<div style="left:1478px;top:156px;width:17px;height:17px;background:#fff100;"></div>
<div style="left:1496px;top:156px;width:17px;height:17px;background:#009944;"></div>
<div style="left:1514px;top:156px;width:17px;height:17px;background:#00a0e9;"></div>
<div style="left:1532px;top:156px;width:17px;height:17px;background:#1d2088;"></div>
<div style="left:1550px;top:156px;width:17px;height:17px;background:#e4007f;"></div>
<div style="left:1568px;top:156px;width:17px;height:17px;background:#959595;"></div>
<div style="left:1586px;top:156px;width:17px;height:17px;background:#898989;"></div>
<div style="left:1604px;top:156px;width:17px;height:17px;background:#7d7d7d;"></div>
<div style="left:1622px;top:156px;width:17px;height:17px;background:#707070;"></div>
<div style="left:1406px;top:174px;width:17px;height:17px;background:#626262;"></div>
<div style="left:1424px;top:174px;width:17px;height:17px;background:#555555;"></div>
<div style="left:1442px;top:174px;width:17px;height:17px;background:#464646;"></div>
<div style="left:1460px;top:174px;width:17px;height:17px;background:#363636;"></div>
<div style="left:1478px;top:174px;width:17px;height:17px;background:#1e1e1e;"></div>
<div style="left:1496px;top:174px;width:17px;height:17px;background:#000000;"></div>
<div style="left:1514px;top:174px;width:17px;height:17px;background:#f29b76;"></div>
<div style="left:1532px;top:174px;width:17px;height:17px;background:#f6b37f;"></div>
<div style="left:1550px;top:174px;width:17px;height:17px;background:#facd89;"></div>
<div style="left:1568px;top:174px;width:17px;height:17px;background:#fff799;"></div>
<div style="left:1586px;top:174px;width:17px;height:17px;background:#cce198;"></div>
<div style="left:1604px;top:174px;width:17px;height:17px;background:#acd598;"></div>
<div style="left:1622px;top:174px;width:17px;height:17px;background:#89c997;"></div>
<div style="left:1406px;top:192px;width:17px;height:17px;background:#84ccc9;"></div>
<div style="left:1424px;top:192px;width:17px;height:17px;background:#7ecef4;"></div>
<div style="left:1442px;top:192px;width:17px;height:17px;background:#88abda;"></div>
<div style="left:1460px;top:192px;width:17px;height:17px;background:#8c97cb;"></div>
<div style="left:1478px;top:192px;width:17px;height:17px;background:#8f82bc;"></div>
<div style="left:1496px;top:192px;width:17px;height:17px;background:#aa89bd;"></div>
<div style="left:1514px;top:192px;width:17px;height:17px;background:#c490bf;"></div>
<div style="left:1532px;top:192px;width:17px;height:17px;background:#f19ec2;"></div>
<div style="left:1550px;top:192px;width:17px;height:17px;background:#f29c9f;"></div>
<div style="left:1568px;top:192px;width:17px;height:17px;background:#ec6941;"></div>
<div style="left:1586px;top:192px;width:17px;height:17px;background:#f19149;"></div>
<div style="left:1604px;top:192px;width:17px;height:17px;background:#f8b551;"></div>
<div style="left:1622px;top:192px;width:17px;height:17px;background:#fff45c;"></div>
<div style="left:1406px;top:210px;width:17px;height:17px;background:#b3d465;"></div>
<div style="left:1424px;top:210px;width:17px;height:17px;background:#80c269;"></div>
<div style="left:1442px;top:210px;width:17px;height:17px;background:#32b16c;"></div>
<div style="left:1460px;top:210px;width:17px;height:17px;background:#13b5b1;"></div>
<div style="left:1478px;top:210px;width:17px;height:17px;background:#00b7ee;"></div>
<div style="left:1496px;top:210px;width:17px;height:17px;background:#448aca;"></div>
<div style="left:1514px;top:210px;width:17px;height:17px;background:#556fb5;"></div>
<div style="left:1532px;top:210px;width:17px;height:17px;background:#5f52a0;"></div>
<div style="left:1550px;top:210px;width:17px;height:17px;background:#8957a1;"></div>
<div style="left:1568px;top:210px;width:17px;height:17px;background:#ae5da1;"></div>
<div style="left:1586px;top:210px;width:17px;height:17px;background:#ea68a2;"></div>
<div style="left:1604px;top:210px;width:17px;height:17px;background:#eb6877;"></div>
<div style="left:1622px;top:210px;width:17px;height:17px;background:#e60012;"></div>
<div style="left:1406px;top:228px;width:17px;height:17px;background:#eb6100;"></div>
<div style="left:1424px;top:228px;width:17px;height:17px;background:#f39800;"></div>
<div style="left:1442px;top:228px;width:17px;height:17px;background:#fff100;"></div>
<div style="left:1460px;top:228px;width:17px;height:17px;background:#8fc31f;"></div>
<div style="left:1478px;top:228px;width:17px;height:17px;background:#22ac38;"></div>
<div style="left:1496px;top:228px;width:17px;height:17px;background:#009944;"></div>
<div style="left:1514px;top:228px;width:17px;height:17px;background:#009e96;"></div>
<div style="left:1532px;top:228px;width:17px;height:17px;background:#00a0e9;"></div>
<div style="left:1550px;top:228px;width:17px;height:17px;background:#0068b7;"></div>
<div style="left:1568px;top:228px;width:17px;height:17px;background:#00479d;"></div>
<div style="left:1586px;top:228px;width:17px;height:17px;background:#1d2088;"></div>
<div style="left:1604px;top:228px;width:17px;height:17px;background:#601986;"></div>
<div style="left:1622px;top:228px;width:17px;height:17px;background:#920783;"></div>
<div style="left:1406px;top:246px;width:17px;height:17px;background:#e4007f;"></div>
<div style="left:1424px;top:246px;width:17px;height:17px;background:#e5004f;"></div>
<div style="left:1442px;top:246px;width:17px;height:17px;background:#a40000;"></div>
<div style="left:1460px;top:246px;width:17px;height:17px;background:#a84200;"></div>
<div style="left:1478px;top:246px;width:17px;height:17px;background:#ac6a00;"></div>
<div style="left:1496px;top:246px;width:17px;height:17px;background:#b7aa00;"></div>
<div style="left:1514px;top:246px;width:17px;height:17px;background:#638c0b;"></div>
<div style="left:1532px;top:246px;width:17px;height:17px;background:#097c25;"></div>
<div style="left:1550px;top:246px;width:17px;height:17px;background:#007130;"></div>
<div style="left:1568px;top:246px;width:17px;height:17px;background:#00736d;"></div>
<div style="left:1586px;top:246px;width:17px;height:17px;background:#0075a9;"></div>
<div style="left:1604px;top:246px;width:17px;height:17px;background:#004986;"></div>
<div style="left:1622px;top:246px;width:17px;height:17px;background:#002e73;"></div>
<div style="left:1406px;top:264px;width:17px;height:17px;background:#100964;"></div>
<div style="left:1424px;top:264px;width:17px;height:17px;background:#440062;"></div>
<div style="left:1442px;top:264px;width:17px;height:17px;background:#6a005f;"></div>
<div style="left:1460px;top:264px;width:17px;height:17px;background:#a4005b;"></div>
<div style="left:1478px;top:264px;width:17px;height:17px;background:#a40035;"></div>
<div style="left:1496px;top:264px;width:17px;height:17px;background:#7d0000;"></div>
<div style="left:1514px;top:264px;width:17px;height:17px;background:#7f2d00;"></div>
<div style="left:1532px;top:264px;width:17px;height:17px;background:#834e00;"></div>
<div style="left:1550px;top:264px;width:17px;height:17px;background:#8a8000;"></div>
<div style="left:1568px;top:264px;width:17px;height:17px;background:#486a00;"></div>
<div style="left:1586px;top:264px;width:17px;height:17px;background:#005e15;"></div>
<div style="left:1604px;top:264px;width:17px;height:17px;background:#005826;"></div>
<div style="left:1622px;top:264px;width:17px;height:17px;background:#005752;"></div>
<div style="left:1406px;top:282px;width:17px;height:17px;background:#005982;"></div>
<div style="left:1424px;top:282px;width:17px;height:17px;background:#003567;"></div>
<div style="left:1442px;top:282px;width:17px;height:17px;background:#001c58;"></div>
<div style="left:1460px;top:282px;width:17px;height:17px;background:#03004c;"></div>
<div style="left:1478px;top:282px;width:17px;height:17px;background:#31004a;"></div>
<div style="left:1496px;top:282px;width:17px;height:17px;background:#500047;"></div>
<div style="left:1514px;top:282px;width:17px;height:17px;background:#7e0043;"></div>
<div style="left:1532px;top:282px;width:17px;height:17px;background:#7d0022;"></div>
<div style="left:1550px;top:282px;width:17px;height:17px;background:#d9c6a9;"></div>
<div style="left:1568px;top:282px;width:17px;height:17px;background:#a6937c;"></div>
<div style="left:1586px;top:282px;width:17px;height:17px;background:#7e6b5a;"></div>
<div style="left:1604px;top:282px;width:17px;height:17px;background:#59493f;"></div>
<div style="left:1622px;top:282px;width:17px;height:17px;background:#362e2b;"></div>
<div style="left:1406px;top:300px;width:17px;height:17px;background:#d7b27c;"></div>
<div style="left:1424px;top:300px;width:17px;height:17px;background:#b48c57;"></div>
<div style="left:1442px;top:300px;width:17px;height:17px;background:#996c33;"></div>
<div style="left:1460px;top:300px;width:17px;height:17px;background:#81511c;"></div>
<div style="left:1478px;top:300px;width:17px;height:17px;background:#6a3906;"></div>
<div style="left:1496px;top:300px;width:17px;height:17px;background:#d4005f;"></div>
<div style="left:1406px;top:336px;width:250px;height:1px;background:#383838;"></div>
<div style="left:1406px;top:337px;width:250px;height:24px;background:#535353;"></div>
<svg style="left:1587px;top:343.5px;" width="11" height="11" viewBox="0 0 12 12"><path d="M0.7 0.7 H11.3 V11.3 H4.6 L0.7 7.4Z" fill="none" stroke="#d0d0d0" stroke-width="1.5"/><path d="M0.7 7.2 H4.8 V11.3Z" fill="#d0d0d0"/></svg>
<svg style="left:1616px;top:343px;" width="11" height="12.5" viewBox="0 0 13 14"><path d="M4.5 0.5 H8.5 V2 H12.5 V3.4 H0.5 V2 H4.5Z" fill="#8a8a8a"/><path d="M1.6 4.4 H11.4 L10.8 13.5 H2.2Z" fill="none" stroke="#8a8a8a" stroke-width="1.3"/><path d="M4.6 5.5V12 M6.5 5.5V12 M8.4 5.5V12" stroke="#8a8a8a" stroke-width="1.1"/></svg>
<div style="left:1406px;top:361px;width:250px;height:3px;background:#464646;"></div>
<div style="left:1406px;top:361px;width:250px;height:1px;background:#3a3a3a;"></div>
<div style="left:1406px;top:363px;width:250px;height:1px;background:#3a3a3a;"></div>
<div style="left:1406px;top:364px;width:250px;height:28px;background:#424242;"></div>
<div class="t" style="left:1406.5px;top:369px;height:18px;line-height:18px;color:#a2a2a2;font-size:11px;white-space:nowrap;width:42px;text-align:center;letter-spacing:0.5px">属性</div>
<div style="left:1448px;top:364px;width:1px;height:28px;background:#383838;"></div>
<div style="left:1448px;top:364px;width:41px;height:29px;background:#535353;"></div>
<div class="t" style="left:1448.5px;top:369px;height:18px;line-height:18px;color:#e8e8e8;font-size:11px;white-space:nowrap;width:41px;text-align:center;letter-spacing:0.5px">调整</div>
<div style="left:1489px;top:364px;width:1px;height:28px;background:#383838;"></div>
<svg style="left:1639.5px;top:374px;" width="11" height="8" viewBox="0 0 11 8"><rect x="0" y="0" width="11" height="1" fill="#c8c8c8"/><rect x="0" y="2" width="11" height="1" fill="#c8c8c8"/><rect x="0" y="4" width="11" height="1" fill="#c8c8c8"/><rect x="0" y="6" width="11" height="1" fill="#c8c8c8"/></svg>
<div style="left:1406px;top:392px;width:250px;height:112px;background:#535353;"></div>
<div class="t" style="left:1415px;top:399px;height:18px;line-height:18px;color:#e6e6e6;font-size:12px;white-space:nowrap;letter-spacing:-0.4px">添加调整</div>
<svg style="left:1454px;top:422px;" width="17" height="17" viewBox="0 0 17 17"><circle cx="8.5" cy="8.5" r="4.2" fill="none" stroke="#dedede" stroke-width="1.2"/><path d="M8.5 4.3 A4.2 4.2 0 0 1 8.5 12.7Z" fill="#dedede"/><path d="M8.5 0V2.4 M8.5 14.6V17 M0 8.5H2.4 M14.6 8.5H17 M2.5 2.5L4.2 4.2 M12.8 12.8L14.5 14.5 M2.5 14.5L4.2 12.8 M12.8 4.2L14.5 2.5" stroke="#dedede" stroke-width="1.1"/></svg>
<svg style="left:1478px;top:424px;" width="18" height="12" viewBox="0 0 18 12"><path d="M0 12 V5 L1 5 L1.6 7.5 L2.6 6 L3.4 8 L4.4 2.5 L5.2 6.5 L6.4 4 L7.4 6 L8.6 0 L9.6 5 L10.8 3 L11.8 6.5 L13 1.5 L14 6.5 L15 5 L16 8 L17 3.5 L18 3.5 V12Z" fill="#dedede"/></svg>
<svg style="left:1503px;top:424px;" width="16" height="13" viewBox="0 0 16 13"><rect x="0.5" y="0.5" width="15" height="12" fill="none" stroke="#9c9c9c" stroke-width="1"/><path d="M5.5 0V13 M10.5 0V13 M0 4.5H16 M0 8.5H16" stroke="#9c9c9c" stroke-width="1"/><path d="M1 12.2 C7 12 7.6 9 8.4 6 C9.2 3 10 1 15 0.8" fill="none" stroke="#dedede" stroke-width="1.3"/></svg>
<svg style="left:1527px;top:425px;" width="16" height="13" viewBox="0 0 16 13"><rect x="0.6" y="0.6" width="14.8" height="11.8" fill="none" stroke="#dedede" stroke-width="1.2"/><path d="M15 1 V12 H1Z" fill="#dedede"/><path d="M2.6 4.5H6.4 M4.5 2.6V6.4" stroke="#dedede" stroke-width="1"/><path d="M9.6 8.6H13.4" stroke="#535353" stroke-width="1"/></svg>
<svg style="left:1551px;top:425px;" width="15" height="14" viewBox="0 0 15 14"><defs><radialGradient id="vg" cx="0.5" cy="0.3" r="0.45"><stop offset="0" stop-color="#555"/><stop offset="1" stop-color="#b4b4b4"/></radialGradient></defs><path d="M0.9 0.7 H14.1 L7.5 12.8Z" fill="url(#vg)" stroke="#dedede" stroke-width="1.3"/></svg>
<svg style="left:1443px;top:451px;" width="16" height="13" viewBox="0 0 16 13"><defs><linearGradient id="hg" x1="0" y1="0" x2="1" y2="0"><stop offset="0" stop-color="#2e2e2e"/><stop offset="1" stop-color="#e4e4e4"/></linearGradient></defs><rect x="0.5" y="0.5" width="15" height="12" fill="none" stroke="#dedede" stroke-width="1"/><rect x="1" y="1" width="14" height="4.5" fill="#2e2e2e"/><path d="M3 1V5.5 M6.4 1V5.5 M9.8 1V5.5 M13.2 1V5.5" stroke="#8e8e8e" stroke-width="1.6"/><rect x="1" y="7" width="14" height="5" fill="url(#hg)"/><rect x="1" y="5.6" width="14" height="1.2" fill="#dedede"/></svg>
<svg style="left:1466px;top:450px;" width="18" height="15" viewBox="0 0 18 15"><path d="M2.6 3.6 L7.4 2.4 M10.6 2.4 L15.4 3.6" stroke="#dedede" stroke-width="1.1"/><circle cx="9" cy="2.4" r="1.5" fill="none" stroke="#dedede" stroke-width="1"/><path d="M3.6 4 L0.9 10 H6.3Z M14.4 4 L11.7 10 H17.1Z" fill="none" stroke="#dedede" stroke-width="0.9"/><path d="M0.3 10 H6.9 C6.5 13.6 0.7 13.6 0.3 10Z M11.1 10 H17.7 C17.3 13.6 11.5 13.6 11.1 10Z" fill="#dedede"/></svg>
<svg style="left:1491px;top:451px;" width="16" height="13" viewBox="0 0 16 13"><rect x="0.6" y="0.6" width="14.8" height="11.8" fill="none" stroke="#dedede" stroke-width="1.2"/><rect x="8" y="1" width="7.4" height="11" fill="#dedede"/></svg>
<svg style="left:1513px;top:451px;" width="18" height="16" viewBox="0 0 18 16"><path d="M0.5 2.5 H4 L5 1 H9.6 L10.6 2.5 H14 V11.5 H0.5Z" fill="#dedede"/><circle cx="7.2" cy="7" r="2.9" fill="#535353"/><circle cx="7.2" cy="7" r="1.5" fill="#dedede"/><circle cx="13.6" cy="11.4" r="3.2" fill="#6a6a6a" stroke="#dedede" stroke-width="1.2"/></svg>
<svg style="left:1538px;top:450px;" width="17" height="16" viewBox="0 0 17 16"><circle cx="8.5" cy="5.2" r="4.9" fill="#8f8f8f"/><circle cx="5.1" cy="10.6" r="4.9" fill="#d6d6d6"/><circle cx="11.9" cy="10.6" r="4.9" fill="#d6d6d6"/><path d="M8.5 6.2 L11 10.4 H6Z" fill="#6e6e6e"/><path d="M5.4 5.8 C6.6 7.4 7.2 7.8 8.5 7.2 C9.8 7.8 10.4 7.4 11.6 5.8 C11.4 8 11 9 9.8 10 H7.2 C6 9 5.6 8 5.4 5.8Z" fill="#a2a2a2"/></svg>
<svg style="left:1563px;top:451px;" width="16" height="13" viewBox="0 0 16 13"><rect x="0" y="0" width="16" height="13" fill="#dedede"/><rect x="1" y="1" width="4.5" height="3.5" fill="#9a9a9a"/><rect x="6" y="1" width="4.5" height="3.5" fill="#7a7a7a"/><rect x="11" y="1" width="4.5" height="3.5" fill="#555"/><rect x="1" y="5" width="4.5" height="3.5" fill="#777"/><rect x="6" y="5" width="4.5" height="3.5" fill="#555"/><rect x="11" y="5" width="4.5" height="3.5" fill="#3c3c3c"/><rect x="1" y="9" width="4.5" height="3.5" fill="#4a4a4a"/><rect x="6" y="9" width="4.5" height="3.5" fill="#3c3c3c"/><rect x="11" y="9" width="4.5" height="3.5" fill="#303030"/></svg>
<svg style="left:1455px;top:478px;" width="16" height="13" viewBox="0 0 16 13"><path d="M15 1 V12 H1Z" fill="#dedede"/><g transform="rotate(-38 8 6.5)"><path d="M3 6.5 A5 3.4 0 0 1 13 6.5Z" fill="#dedede"/><path d="M3 6.5 A5 3.4 0 0 0 13 6.5Z" fill="#5a5a5a"/></g><rect x="0.6" y="0.6" width="14.8" height="11.8" fill="none" stroke="#dedede" stroke-width="1.2"/></svg>
<svg style="left:1479px;top:478px;" width="16" height="13" viewBox="0 0 16 13"><rect x="1" y="1" width="14" height="11" fill="#5e5e5e"/><path d="M1 8 L8 1 H11.5 L1 11.5Z" fill="#b8b8b8"/><path d="M4 12 L15 1 V4.5 L7.5 12Z" fill="#8a8a8a"/><path d="M10.5 12 L15 7.5 V10.5 L13.5 12Z" fill="#d0d0d0"/><rect x="0.6" y="0.6" width="14.8" height="11.8" fill="none" stroke="#dedede" stroke-width="1.2"/></svg>
<svg style="left:1503px;top:478px;" width="16" height="13" viewBox="0 0 16 13"><rect x="1" y="1" width="14" height="11" fill="#dedede"/><path d="M1.6 10.6 V8.4 H4.4 V6.8 H7.4 V5.2 H10.4 V3.4 H14.4 V5.2 H12 V7 H9 V8.6 H6 V10.6Z" fill="#444"/><path d="M9 11.4 H14.4 V9.6 H11.6 V10.4 H9Z" fill="#444"/><rect x="0.6" y="0.6" width="14.8" height="11.8" fill="none" stroke="#dedede" stroke-width="1.2"/></svg>
<svg style="left:1527px;top:478px;" width="16" height="13" viewBox="0 0 16 13"><path d="M1 1 H15 L8 6.5Z" fill="#e4e4e4"/><path d="M1 1 L8 6.5 L1 12Z" fill="#8e8e8e"/><path d="M15 1 L8 6.5 L15 12Z" fill="#6e6e6e"/><path d="M1 12 L8 6.5 L15 12Z" fill="#a8a8a8"/><rect x="0.6" y="0.6" width="14.8" height="11.8" fill="none" stroke="#dedede" stroke-width="1.2"/></svg>
<svg style="left:1551px;top:478px;" width="16" height="13" viewBox="0 0 16 13"><defs><linearGradient id="hg2" x1="0" y1="0" x2="1" y2="0"><stop offset="0" stop-color="#2e2e2e"/><stop offset="1" stop-color="#e6e6e6"/></linearGradient></defs><rect x="0.6" y="0.6" width="14.8" height="11.8" fill="url(#hg2)" stroke="#dedede" stroke-width="1.2"/></svg>
<div style="left:1406px;top:504px;width:250px;height:3px;background:#464646;"></div>
<div style="left:1406px;top:504px;width:250px;height:1px;background:#3a3a3a;"></div>
<div style="left:1406px;top:506px;width:250px;height:1px;background:#3a3a3a;"></div>
<div style="left:1406px;top:507px;width:250px;height:27px;background:#424242;"></div>
<div style="left:1406px;top:507px;width:41px;height:28px;background:#535353;"></div>
<div class="t" style="left:1406.5px;top:512px;height:18px;line-height:18px;color:#e8e8e8;font-size:11px;white-space:nowrap;width:41px;text-align:center;letter-spacing:0.5px">图层</div>
<div style="left:1447px;top:507px;width:1px;height:27px;background:#383838;"></div>
<div class="t" style="left:1447.5px;top:512px;height:18px;line-height:18px;color:#a2a2a2;font-size:11px;white-space:nowrap;width:41px;text-align:center;letter-spacing:0.5px">通道</div>
<div style="left:1488px;top:507px;width:1px;height:27px;background:#383838;"></div>
<div class="t" style="left:1488.5px;top:512px;height:18px;line-height:18px;color:#a2a2a2;font-size:11px;white-space:nowrap;width:42px;text-align:center;letter-spacing:0.5px">路径</div>
<div style="left:1530px;top:507px;width:1px;height:27px;background:#383838;"></div>
<svg style="left:1639.5px;top:517px;" width="11" height="8" viewBox="0 0 11 8"><rect x="0" y="0" width="11" height="1" fill="#c8c8c8"/><rect x="0" y="2" width="11" height="1" fill="#c8c8c8"/><rect x="0" y="4" width="11" height="1" fill="#c8c8c8"/><rect x="0" y="6" width="11" height="1" fill="#c8c8c8"/></svg>
<div style="left:1406px;top:535px;width:250px;height:86px;background:#535353;"></div>
<div style="left:1406px;top:566px;width:250px;height:1px;background:#474747;"></div>
<div style="left:1409px;top:542px;width:88px;height:21px;background:#454545;border:1px solid #626262;border-radius:3px;box-sizing:border-box;"></div>
<svg style="left:1417px;top:547px;" width="12" height="12" viewBox="0 0 12 12"><circle cx="7.4" cy="4.6" r="3.6" fill="none" stroke="#d6d6d6" stroke-width="1.4"/><path d="M4.8 7.2 L0.8 11.2" stroke="#d6d6d6" stroke-width="1.8"/></svg>
<div class="t" style="left:1433px;top:545px;height:18px;line-height:18px;color:#f0f0f0;font-size:12px;white-space:nowrap;letter-spacing:-0.5px">类型</div>
<svg style="left:1486px;top:551px;" width="8" height="5" viewBox="0 0 8 5"><path d="M0.5 0.5 L4.0 4.3 L7.5 0.5" fill="none" stroke="#d0d0d0" stroke-width="1.0"/></svg>
<svg style="left:1511px;top:547px;" width="14" height="11" viewBox="0 0 14 11"><rect x="0.6" y="0.6" width="12.8" height="9.8" fill="none" stroke="#d8d8d8" stroke-width="1.2"/><path d="M2.4 8.6 L5.4 4.4 L7.6 7 L9 5.6 L11.6 8.6Z" fill="#d8d8d8"/></svg>
<svg style="left:1536px;top:546px;" width="13" height="13" viewBox="0 0 13 13"><circle cx="6.5" cy="6.5" r="5.6" fill="none" stroke="#d8d8d8" stroke-width="1.3"/><path d="M10.5 2.5 A5.6 5.6 0 0 1 2.5 10.5Z" fill="#d8d8d8"/></svg>
<div class="t" style="left:1561px;top:543px;height:20px;line-height:20px;color:#e0e0e0;font-size:14px;white-space:nowrap;font-family:'Liberation Serif',serif;font-weight:bold;">T</div>
<svg style="left:1585px;top:546.5px;" width="12" height="12" viewBox="0 0 14 13"><rect x="2" y="2" width="10" height="9" fill="none" stroke="#d8d8d8" stroke-width="1.2"/><rect x="0" y="0" width="3.6" height="3.6" fill="#d8d8d8"/><rect x="10.4" y="0" width="3.6" height="3.6" fill="#d8d8d8"/><rect x="0" y="9.4" width="3.6" height="3.6" fill="#d8d8d8"/><rect x="10.4" y="9.4" width="3.6" height="3.6" fill="#d8d8d8"/><rect x="1.1" y="1.1" width="1.4" height="1.4" fill="#535353"/><rect x="11.5" y="1.1" width="1.4" height="1.4" fill="#535353"/><rect x="1.1" y="10.5" width="1.4" height="1.4" fill="#535353"/><rect x="11.5" y="10.5" width="1.4" height="1.4" fill="#535353"/></svg>
<svg style="left:1609px;top:546px;" width="12" height="14" viewBox="0 0 12 14"><path d="M3.6 0.6 H8 L11.4 4 V10 H3.6Z" fill="none" stroke="#d8d8d8" stroke-width="1.2"/><path d="M7.6 0.6 V4.4 H11.4" fill="none" stroke="#d8d8d8" stroke-width="1"/><rect x="0.4" y="7.6" width="6" height="6" fill="#d8d8d8"/></svg>
<div style="left:1637px;top:544px;width:10px;height:19px;background:#454545;border-radius:5px;"></div>
<div style="left:1638px;top:544px;width:9px;height:9px;background:#e0e0e0;border-radius:50%;"></div>
<div style="left:1409px;top:570px;width:119px;height:20px;background:#454545;border:1px solid #626262;border-radius:3px;box-sizing:border-box;"></div>
<div class="t" style="left:1418px;top:572px;height:19px;line-height:19px;color:#f0f0f0;font-size:12px;white-space:nowrap;letter-spacing:-0.5px">正常</div>
<svg style="left:1517px;top:578px;" width="8" height="5" viewBox="0 0 8 5"><path d="M0.5 0.5 L4.0 4.3 L7.5 0.5" fill="none" stroke="#d0d0d0" stroke-width="1.0"/></svg>
<div class="t" style="left:1536px;top:572px;height:19px;line-height:19px;color:#e6e6e6;font-size:12px;white-space:nowrap;letter-spacing:-0.2px">不透明度：</div>
<div style="left:1591px;top:570px;width:56px;height:20px;background:#454545;border:1px solid #626262;border-radius:3px;box-sizing:border-box;"></div>
<div style="left:1630px;top:571px;width:1px;height:18px;background:#626262;"></div>
<svg style="left:1634px;top:578px;" width="8" height="5" viewBox="0 0 8 5"><path d="M0.5 0.5 L4.0 4.3 L7.5 0.5" fill="none" stroke="#d0d0d0" stroke-width="1.0"/></svg>
<div class="t" style="left:1594px;top:572px;height:18px;line-height:18px;color:#f0f0f0;font-size:12px;white-space:nowrap;letter-spacing:-0.3px">40%</div>
<div style="left:1406px;top:593px;width:250px;height:1px;background:#4b4b4b;"></div>
<div style="left:1532px;top:569px;width:120px;height:26px;border:2px solid #fb0000;box-sizing:border-box;"></div>
<div class="t" style="left:1413px;top:599px;height:18px;line-height:18px;color:#e6e6e6;font-size:12px;white-space:nowrap;letter-spacing:-0.2px">锁定：</div>
<svg style="left:1450px;top:601px;" width="12" height="12" viewBox="0 0 12 12"><rect x="0" y="0" width="4" height="4" fill="#8c8c8c"/><rect x="4" y="0" width="4" height="4" fill="#5e5e5e"/><rect x="8" y="0" width="4" height="4" fill="#8c8c8c"/><rect x="0" y="4" width="4" height="4" fill="#5e5e5e"/><rect x="4" y="4" width="4" height="4" fill="#8c8c8c"/><rect x="8" y="4" width="4" height="4" fill="#5e5e5e"/><rect x="0" y="8" width="4" height="4" fill="#8c8c8c"/><rect x="4" y="8" width="4" height="4" fill="#5e5e5e"/><rect x="8" y="8" width="4" height="4" fill="#8c8c8c"/></svg>
<svg style="left:1471px;top:600px;" width="14" height="14" viewBox="0 0 14 14"><path d="M13.6 0.2 L8.8 9 L5.8 6.8 Z" fill="#8e8e8e"/><path d="M5.2 7.4 L8.2 9.6 C7.8 12.6 4.8 13.8 0.6 13.2 C2.8 12 2.6 8.8 5.2 7.4Z" fill="#8e8e8e"/></svg>
<svg style="left:1493px;top:600px;" width="14" height="14" viewBox="0 0 15 15"><path d="M7.5 0 L10.2 3.2 L8.3 3.2 L8.3 6.7 L11.8 6.7 L11.8 4.8 L15 7.5 L11.8 10.2 L11.8 8.3 L8.3 8.3 L8.3 11.8 L10.2 11.8 L7.5 15 L4.8 11.8 L6.7 11.8 L6.7 8.3 L3.2 8.3 L3.2 10.2 L0 7.5 L3.2 4.8 L3.2 6.7 L6.7 6.7 L6.7 3.2 L4.8 3.2 Z" fill="#d0d0d0"/></svg>
<svg style="left:1514px;top:600px;" width="15" height="14" viewBox="0 0 15 14"><path d="M3.5 0V11 H15 M0 3.5 H11.5 V14" fill="none" stroke="#d0d0d0" stroke-width="1.2"/><path d="M9 1 L12 3.5 L9 6Z" fill="#d0d0d0" opacity=".0"/><path d="M13 0.5 L14.6 2.4" stroke="#d0d0d0" stroke-width="1" stroke-dasharray="1 1"/></svg>
<svg style="left:1538px;top:599px;" width="11" height="14" viewBox="0 0 11 14"><path d="M2.8 7 V5 C2.8 1.6 8.2 1.6 8.2 5 V7" fill="none" stroke="#d0d0d0" stroke-width="1.5"/><rect x="0.4" y="6.6" width="10.2" height="7" rx="1" fill="#d0d0d0"/><rect x="4.8" y="8.4" width="1.4" height="2.8" fill="#444"/></svg>
<div class="t" style="left:1560px;top:599px;height:18px;line-height:18px;color:#e6e6e6;font-size:12px;white-space:nowrap;letter-spacing:-0.2px">填充：</div>
<div style="left:1591px;top:597px;width:56px;height:20px;background:#454545;border:1px solid #626262;border-radius:3px;box-sizing:border-box;"></div>
<div style="left:1630px;top:598px;width:1px;height:18px;background:#626262;"></div>
<svg style="left:1634px;top:605px;" width="8" height="5" viewBox="0 0 8 5"><path d="M0.5 0.5 L4.0 4.3 L7.5 0.5" fill="none" stroke="#d0d0d0" stroke-width="1.0"/></svg>
<div class="t" style="left:1594px;top:599px;height:18px;line-height:18px;color:#f0f0f0;font-size:12px;white-space:nowrap;letter-spacing:-0.3px">100%</div>
<div style="left:1406px;top:621px;width:250px;height:1px;background:#383838;"></div>
<div style="left:1406px;top:622px;width:250px;height:284px;background:#4d4d4d;"></div>
<div style="left:1641px;top:622px;width:15px;height:284px;background:#4a4a4a;"></div>
<div style="left:1406px;top:622px;width:235px;height:54px;background:#535353;"></div>
<div style="left:1437px;top:622px;width:204px;height:26px;background:#6a6a6a;"></div>
<div style="left:1436px;top:622px;width:1px;height:54px;background:#464646;"></div>
<div style="left:1406px;top:648px;width:235px;height:1px;background:#464646;"></div>
<div style="left:1406px;top:676px;width:235px;height:1px;background:#464646;"></div>
<svg style="left:1415px;top:631px;" width="14" height="10" viewBox="0 0 14 10"><path d="M0.4 5 C3.4 -0.6 10.6 -0.6 13.6 5 C10.6 10.6 3.4 10.6 0.4 5Z" fill="#e0e0e0"/><circle cx="7" cy="5" r="3.2" fill="#4a4a4a"/><circle cx="7" cy="5" r="1.7" fill="#e0e0e0"/></svg>
<svg style="left:1415px;top:658px;" width="14" height="10" viewBox="0 0 14 10"><path d="M0.4 5 C3.4 -0.6 10.6 -0.6 13.6 5 C10.6 10.6 3.4 10.6 0.4 5Z" fill="#e0e0e0"/><circle cx="7" cy="5" r="3.2" fill="#4a4a4a"/><circle cx="7" cy="5" r="1.7" fill="#e0e0e0"/></svg>
<div style="left:1440px;top:625px;width:32px;height:20px;background:#6c6c6c;border:1px solid #333;box-sizing:border-box;"></div>
<div style="left:1448px;top:627px;width:17px;height:16px;background:linear-gradient(135deg,#111 0%,#4a4a4a 35%,#a8a8a8 65%,#f4f4f4 100%)"></div>
<svg style="left:1438px;top:622px;" width="36" height="26" viewBox="0 0 36 26"><path d="M0.5 5.5 V0.5 H12 M24 0.5 H35.5 V5.5 M35.5 20 V25.5 H24 M12 25.5 H0.5 V20" fill="none" stroke="#ffffff" stroke-width="1"/></svg>
<svg style="left:1475px;top:627px;" width="9" height="16" viewBox="0 0 9 16"><rect x="1.6" y="0.9" width="5.8" height="7" rx="2.9" fill="none" stroke="#dadada" stroke-width="1.6"/><rect x="1.6" y="8.1" width="5.8" height="7" rx="2.9" fill="none" stroke="#dadada" stroke-width="1.6"/><path d="M4.5 5.5 V10.5" stroke="#dadada" stroke-width="1.6"/></svg>
<div style="left:1487px;top:625px;width:32px;height:21px;background:#ffffff;border:1px solid #2a2a2a;box-sizing:border-box;"></div>
<div class="t" style="left:1529px;top:627px;height:20px;line-height:20px;color:#ffffff;font-size:12px;white-space:nowrap;letter-spacing:0px">渐变填充 <span style="font-family:'Liberation Serif',serif;font-size:13px">1</span></div>
<div style="left:1440px;top:652px;width:32px;height:20px;background:#000;border:1px solid #3a3a3a;box-sizing:border-box;"></div>
<div class="t" style="left:1481px;top:654px;height:20px;line-height:20px;color:#e6e6e6;font-size:12px;white-space:nowrap;letter-spacing:0px">图层 <span style="font-family:'Liberation Serif',serif;font-size:13px">0</span></div>
<div style="left:1406px;top:906px;width:250px;height:1px;background:#383838;"></div>
<div style="left:1406px;top:907px;width:250px;height:24px;background:#535353;"></div>
<svg style="left:1453px;top:914px;" width="15" height="9" viewBox="0 0 15 9"><rect x="0.7" y="1.1" width="6.6" height="6.8" rx="3.3" fill="none" stroke="#8c8c8c" stroke-width="1.4"/><rect x="7.7" y="1.1" width="6.6" height="6.8" rx="3.3" fill="none" stroke="#8c8c8c" stroke-width="1.4"/><path d="M4.4 4.5 H10.6" stroke="#8c8c8c" stroke-width="1.4"/></svg>
<div class="t" style="left:1481px;top:909px;height:20px;line-height:20px;color:#dcdcdc;font-size:14.5px;white-space:nowrap;font-family:'Liberation Sans',sans-serif;font-style:italic;letter-spacing:-0.6px;">fx</div>
<svg style="left:1494px;top:926px;" width="4" height="3" viewBox="0 0 4 3"><path d="M0 0H4L2 2.6Z" fill="#d0d0d0"/></svg>
<svg style="left:1507px;top:913px;" width="13.4" height="10.2" viewBox="0 0 14 11"><rect x="0" y="0" width="14" height="11" fill="#d0d0d0"/><circle cx="7" cy="5.2" r="3" fill="#535353"/></svg>
<svg style="left:1535px;top:912px;" width="13" height="13" viewBox="0 0 13 13"><circle cx="6.5" cy="6.5" r="5.6" fill="none" stroke="#d0d0d0" stroke-width="1.3"/><path d="M10.5 2.5 A5.6 5.6 0 0 1 2.5 10.5Z" fill="#d0d0d0"/></svg>
<svg style="left:1548px;top:926px;" width="4" height="3" viewBox="0 0 4 3"><path d="M0 0H4L2 2.6Z" fill="#d0d0d0"/></svg>
<svg style="left:1562px;top:913px;" width="12.5" height="10.5" viewBox="0 0 14 11"><path d="M0 0.4 H5.6 L6.8 1.8 H14 V11 H0Z" fill="#d0d0d0"/></svg>
<svg style="left:1590px;top:913.5px;" width="11" height="11" viewBox="0 0 12 12"><path d="M0.7 0.7 H11.3 V11.3 H4.6 L0.7 7.4Z" fill="none" stroke="#d0d0d0" stroke-width="1.5"/><path d="M0.7 7.2 H4.8 V11.3Z" fill="#d0d0d0"/></svg>
<svg style="left:1616px;top:913px;" width="11" height="12.5" viewBox="0 0 13 14"><path d="M4.5 0.5 H8.5 V2 H12.5 V3.4 H0.5 V2 H4.5Z" fill="#d0d0d0"/><path d="M1.6 4.4 H11.4 L10.8 13.5 H2.2Z" fill="none" stroke="#d0d0d0" stroke-width="1.3"/><path d="M4.6 5.5V12 M6.5 5.5V12 M8.4 5.5V12" stroke="#d0d0d0" stroke-width="1.1"/></svg>
<div style="left:1659px;top:79px;width:64px;height:852px;background:#535353;"></div>
<div style="left:1659px;top:67px;width:64px;height:11px;background:#424242;"></div>
<svg style="left:1710px;top:70px;" width="8" height="6" viewBox="0 0 8 6"><path d="M8 0 L4.2 3 L8 6 L7 3 Z M3.8 0 L0 3 L3.8 6 L2.8 3 Z" fill="#cfcfcf"/></svg>
<div style="left:1659px;top:78px;width:64px;height:1px;background:#383838;"></div>
<svg style="left:1681px;top:82px;" width="20" height="4" viewBox="0 0 20 4"><rect x="0" y="0" width="1" height="4" fill="#3e3e3e"/><rect x="2" y="0" width="1" height="4" fill="#3e3e3e"/><rect x="4" y="0" width="1" height="4" fill="#3e3e3e"/><rect x="6" y="0" width="1" height="4" fill="#3e3e3e"/><rect x="8" y="0" width="1" height="4" fill="#3e3e3e"/><rect x="10" y="0" width="1" height="4" fill="#3e3e3e"/><rect x="12" y="0" width="1" height="4" fill="#3e3e3e"/><rect x="14" y="0" width="1" height="4" fill="#3e3e3e"/><rect x="16" y="0" width="1" height="4" fill="#3e3e3e"/><rect x="18" y="0" width="1" height="4" fill="#3e3e3e"/></svg>
<svg style="left:1667px;top:93px;" width="23" height="18" viewBox="0 0 23 18"><path d="M7 17 C3 17 0.8 14.4 0.8 11.2 C0.8 8 3 5.8 6 5.4 C7.4 2.6 10.2 0.8 13.6 0.8 C18.4 0.8 22.2 4.4 22.2 9 C22.2 13.6 18.6 17 14 17 Z" fill="#cdcdcd"/><path d="M7.4 14.4 C5 14.4 3.4 13 3.4 11 C3.4 9 5 7.6 7 7.6 C8 7.6 8.8 8 9.6 8.6 L14.6 13 C15.6 13.8 17 13.6 18 12.8 C20.4 10.8 20 6.6 17.4 4.6 C14.8 2.6 11 3.4 9.4 6.2" fill="none" stroke="#555555" stroke-width="1.1"/><path d="M12.2 8.6 L10.6 7.2 M7.4 14.4 H13" fill="none" stroke="#555555" stroke-width="1.1"/></svg>
<div class="t" style="left:1697px;top:94px;height:18px;line-height:18px;color:#e6e6e6;font-size:11.5px;white-space:nowrap;">库</div>
<div style="left:1659px;top:119px;width:64px;height:1px;background:#383838;"></div>
</body></html>
